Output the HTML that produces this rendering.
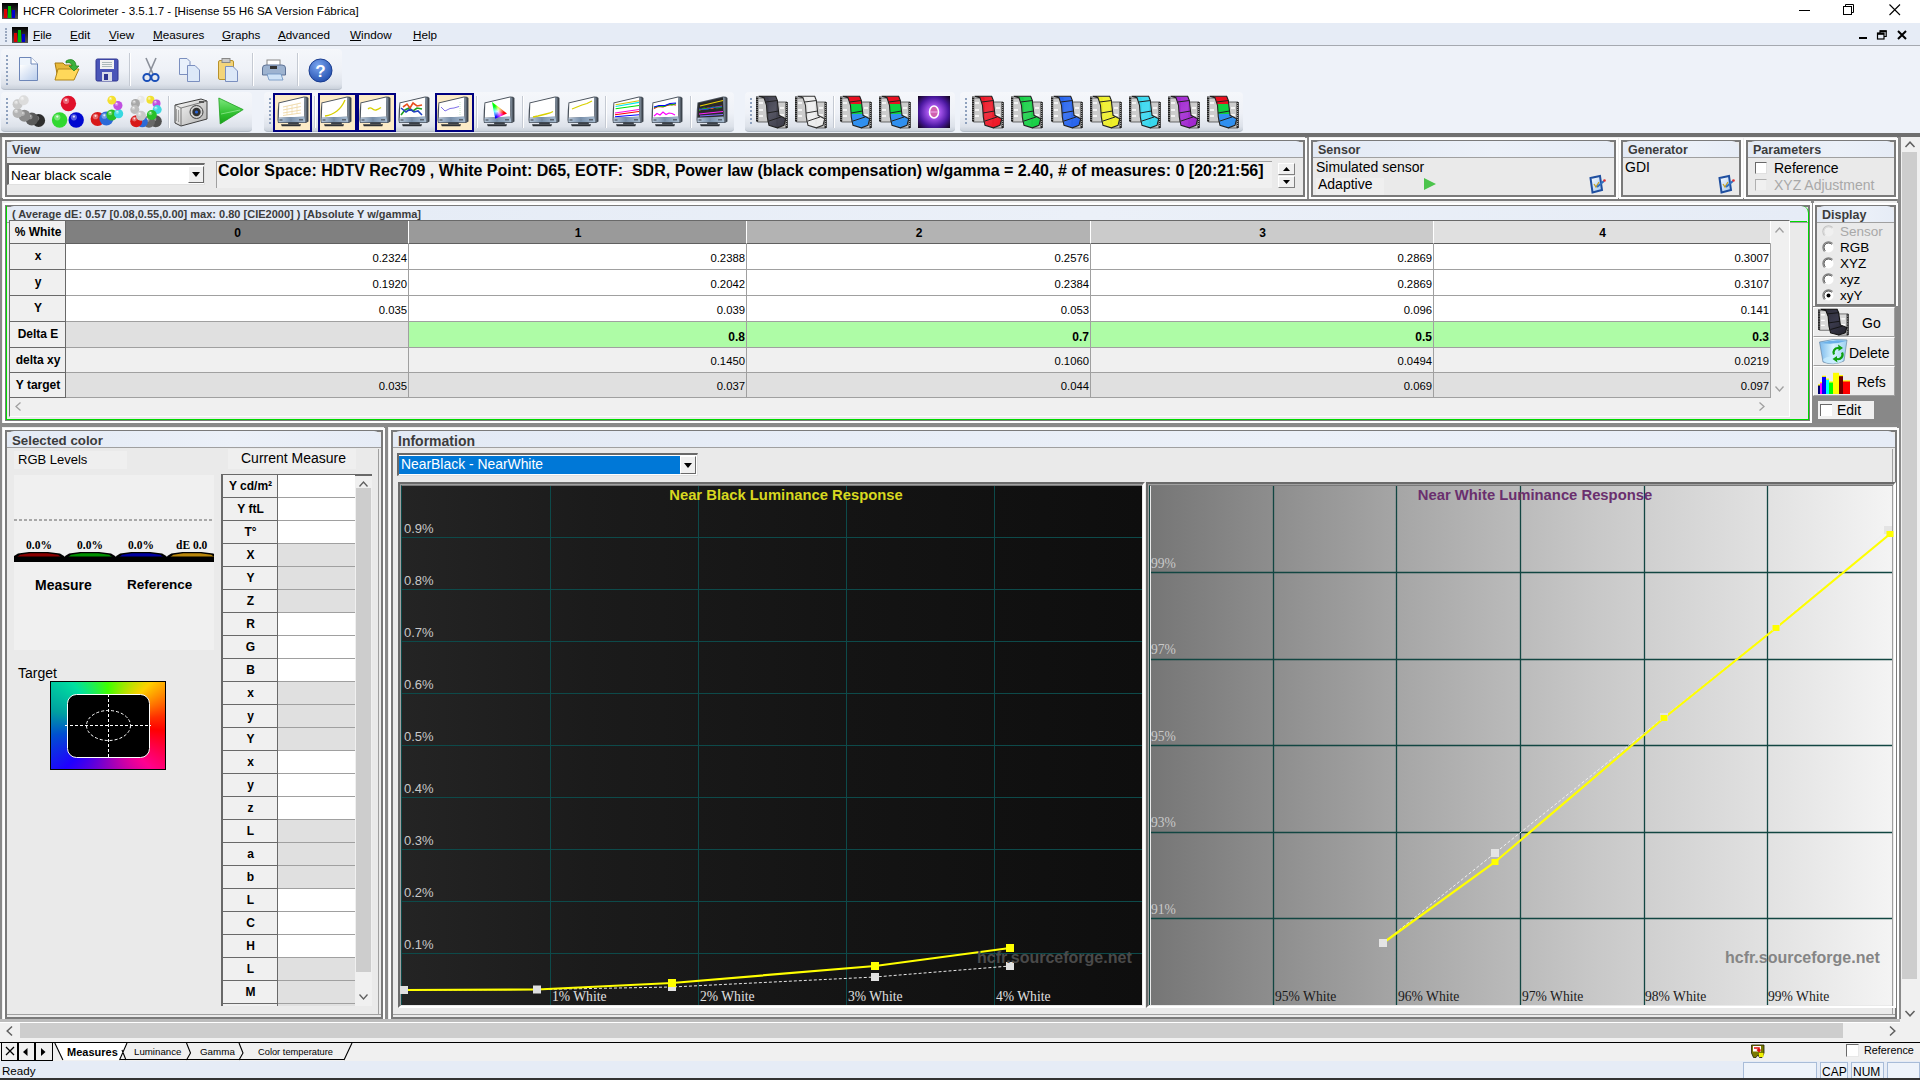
<!DOCTYPE html>
<html><head><meta charset="utf-8">
<style>
*{margin:0;padding:0;box-sizing:border-box}
html,body{width:1920px;height:1080px;overflow:hidden;background:#f0f0f0;font-family:"Liberation Sans",sans-serif;font-size:12px;color:#000;position:relative}
.a{position:absolute}
.t{position:absolute;white-space:nowrap;line-height:1}
.b{font-weight:bold}
svg{position:absolute;overflow:visible}
</style></head><body>

<div class="a" style="left:0px;top:0px;width:1920px;height:23px;background:#fff"></div>
<svg style="left:2px;top:3px" width="16" height="16" viewBox="0 0 16 16" ><defs><linearGradient id="ai" x1="0" y1="0" x2="0" y2="1"><stop offset="0" stop-color="#000"/><stop offset="1" stop-color="#555"/></linearGradient></defs>
<rect x="0" y="0" width="16" height="16" fill="url(#ai)"/>
<rect x="2" y="6" width="3" height="9" fill="#d00"/><rect x="6" y="3" width="3" height="12" fill="#0b0"/><rect x="10" y="7" width="3" height="8" fill="#00c"/></svg>
<div class="t" style="left:23px;top:5px;font-size:11.6px;color:#000">HCFR Colorimeter - 3.5.1.7 - [Hisense 55 H6 SA Version F&aacute;brica]</div>
<div class="a" style="left:1799px;top:10px;width:11px;height:1px;background:#000"></div>
<svg style="left:1843px;top:4px" width="12" height="12" viewBox="0 0 12 12" ><rect x="0.5" y="2.5" width="8" height="8" fill="none" stroke="#000"/><path d="M2.5 2.5 V0.5 H10.5 V8.5 H8.5" fill="none" stroke="#000"/></svg>
<svg style="left:1889px;top:4px" width="12" height="12" viewBox="0 0 12 12" ><path d="M0.5 0.5 L11 11 M11 0.5 L0.5 11" stroke="#000" stroke-width="1.1"/></svg>
<div class="a" style="left:0px;top:23px;width:1920px;height:22px;background:#e6ecf6"></div>
<div class="a" style="left:0px;top:45px;width:1920px;height:1px;background:#a5a9b0"></div>
<div class="a" style="left:0px;top:46px;width:1920px;height:87px;background:#eef2f9"></div>
<div class="a" style="left:0px;top:133px;width:1920px;height:4px;background:#6f6f6f"></div>
<div class="a" style="left:5px;top:28px;width:2px;height:2px;background:#9aa8bf"></div>
<div class="a" style="left:5px;top:31px;width:2px;height:2px;background:#9aa8bf"></div>
<div class="a" style="left:5px;top:34px;width:2px;height:2px;background:#9aa8bf"></div>
<div class="a" style="left:5px;top:37px;width:2px;height:2px;background:#9aa8bf"></div>
<div class="a" style="left:5px;top:40px;width:2px;height:2px;background:#9aa8bf"></div>
<svg style="left:12px;top:27px" width="16" height="16" viewBox="0 0 16 16" ><defs><linearGradient id="ai" x1="0" y1="0" x2="0" y2="1"><stop offset="0" stop-color="#000"/><stop offset="1" stop-color="#555"/></linearGradient></defs>
<rect x="0" y="0" width="16" height="16" fill="url(#ai)"/>
<rect x="2" y="6" width="3" height="9" fill="#d00"/><rect x="6" y="3" width="3" height="12" fill="#0b0"/><rect x="10" y="7" width="3" height="8" fill="#00c"/></svg>
<div class="t" style="left:33px;top:29px;font-size:11.7px;color:#000"><u>F</u>ile</div>
<div class="t" style="left:70px;top:29px;font-size:11.7px;color:#000"><u>E</u>dit</div>
<div class="t" style="left:109px;top:29px;font-size:11.7px;color:#000"><u>V</u>iew</div>
<div class="t" style="left:153px;top:29px;font-size:11.7px;color:#000"><u>M</u>easures</div>
<div class="t" style="left:222px;top:29px;font-size:11.7px;color:#000"><u>G</u>raphs</div>
<div class="t" style="left:278px;top:29px;font-size:11.7px;color:#000"><u>A</u>dvanced</div>
<div class="t" style="left:350px;top:29px;font-size:11.7px;color:#000"><u>W</u>indow</div>
<div class="t" style="left:413px;top:29px;font-size:11.7px;color:#000"><u>H</u>elp</div>
<div class="a" style="left:1859px;top:37px;width:8px;height:2px;background:#000"></div>
<svg style="left:1877px;top:30px" width="10" height="10" viewBox="0 0 10 10" ><rect x="0.5" y="3" width="6.5" height="6" fill="none" stroke="#000" stroke-width="1.2"/><rect x="0.5" y="3" width="6.5" height="1.8" fill="#000"/><path d="M3 3 V0.8 H9.2 V6.5 H7" fill="none" stroke="#000" stroke-width="1.2"/><rect x="3" y="0.5" width="6.5" height="1.6" fill="#000"/></svg>
<svg style="left:1897px;top:30px" width="10" height="10" viewBox="0 0 10 10" ><path d="M1 1 L9 9 M9 1 L1 9" stroke="#000" stroke-width="2"/></svg>
<div class="a" style="left:1px;top:49px;width:341px;height:41px;border-radius:4px;background:linear-gradient(#f5f7fb 0%,#eef1f7 55%,#dde2ea 88%,#c9d0da 100%);border-bottom:1px solid #b4bcc8"></div>
<div class="a" style="left:6px;top:55px;width:2px;height:2px;background:#8fa1bd"></div>
<div class="a" style="left:6px;top:59px;width:2px;height:2px;background:#8fa1bd"></div>
<div class="a" style="left:6px;top:63px;width:2px;height:2px;background:#8fa1bd"></div>
<div class="a" style="left:6px;top:67px;width:2px;height:2px;background:#8fa1bd"></div>
<div class="a" style="left:6px;top:71px;width:2px;height:2px;background:#8fa1bd"></div>
<div class="a" style="left:6px;top:75px;width:2px;height:2px;background:#8fa1bd"></div>
<div class="a" style="left:6px;top:79px;width:2px;height:2px;background:#8fa1bd"></div>
<div class="a" style="left:6px;top:83px;width:2px;height:2px;background:#8fa1bd"></div>
<div class="a" style="left:129px;top:53px;width:1px;height:33px;background:#c5cad3"></div>
<div class="a" style="left:130px;top:53px;width:1px;height:33px;background:#fff"></div>
<div class="a" style="left:252px;top:53px;width:1px;height:33px;background:#c5cad3"></div>
<div class="a" style="left:253px;top:53px;width:1px;height:33px;background:#fff"></div>
<div class="a" style="left:297px;top:53px;width:1px;height:33px;background:#c5cad3"></div>
<div class="a" style="left:298px;top:53px;width:1px;height:33px;background:#fff"></div>
<svg style="left:18px;top:56px" width="22" height="26" viewBox="0 0 22 26" ><path d="M1.5 1.5 H13 L19.5 8 V24.5 H1.5 Z" fill="#eef4fc" stroke="#6d86b8"/><path d="M13 1.5 V8 H19.5" fill="#fff" stroke="#6d86b8"/><defs><linearGradient id="ng" x1="0" y1="0" x2="1" y2="1"><stop offset="0" stop-color="#fff"/><stop offset="1" stop-color="#b9cdec"/></linearGradient></defs><rect x="2" y="9" width="17" height="15" fill="url(#ng)"/></svg>
<svg style="left:54px;top:57px" width="27" height="25" viewBox="0 0 27 25" ><path d="M1 6 H9 L11 8 H20 V22 H4 Z" fill="#e8b93a" stroke="#a77a12"/><path d="M4 12 H25 L20 23 H1 Z" fill="#ffd85a" stroke="#b08418"/><path d="M12 4 C17 1 22 3 22 9 L25 9 L20 14 L15 9 L18 9 C18 6 15 5 12 6Z" fill="#3cb23c" stroke="#1c7a1c" stroke-width="0.7"/></svg>
<svg style="left:95px;top:58px" width="24" height="24" viewBox="0 0 24 24" ><rect x="1" y="1" width="22" height="22" rx="1.5" fill="#4a55b8" stroke="#2e3590"/><rect x="5" y="2" width="14" height="9" fill="#f2f2f2"/><path d="M7 4.5 H17 M7 6.5 H17 M7 8.5 H17" stroke="#9aa" stroke-width="0.8"/><rect x="7" y="14" width="10" height="9" fill="#d8dbe8"/><rect x="9" y="16" width="4" height="6" fill="#2e3590"/></svg>
<svg style="left:141px;top:57px" width="20" height="26" viewBox="0 0 20 26" ><path d="M5 1 L12 17 M15 1 L8 17" stroke="#8a8f99" stroke-width="1.6"/><circle cx="6" cy="20.5" r="3.6" fill="none" stroke="#1a4fb8" stroke-width="2"/><circle cx="14" cy="20.5" r="3.6" fill="none" stroke="#1a4fb8" stroke-width="2"/></svg>
<svg style="left:178px;top:57px" width="24" height="26" viewBox="0 0 24 26" ><path d="M1.5 1.5 H9 L12 4.5 V17.5 H1.5Z" fill="#e8f0fb" stroke="#7b8fbf"/><path d="M9.5 8.5 H17 L21.5 13 V24.5 H9.5Z" fill="#dce8f8" stroke="#7b8fbf"/></svg>
<svg style="left:217px;top:57px" width="24" height="26" viewBox="0 0 24 26" ><rect x="1.5" y="3.5" width="15" height="19" rx="1.5" fill="#f3d479" stroke="#b8912a"/><rect x="5" y="1.5" width="8" height="4" fill="#c8c8c8" stroke="#888"/><path d="M8.5 9.5 H16 L20.5 14 V24.5 H8.5Z" fill="#dce8f8" stroke="#7b8fbf"/></svg>
<svg style="left:261px;top:58px" width="26" height="24" viewBox="0 0 26 24" ><rect x="6" y="2" width="13" height="8" fill="#fff" stroke="#888"/><path d="M1.5 10 Q1.5 7 5 7 H21 Q24.5 7 24.5 10 V17 H1.5Z" fill="#9db3d0" stroke="#5e7396"/><rect x="9" y="8" width="7" height="3" fill="#333"/><path d="M6 16 L20 16 L22 22 L8 22Z" fill="#cfe3f7" stroke="#6a8fbf" stroke-width="0.8"/></svg>
<svg style="left:308px;top:58px" width="26" height="26" viewBox="0 0 26 26" ><defs><radialGradient id="hg" cx="0.4" cy="0.3" r="0.8"><stop offset="0" stop-color="#7aa6f0"/><stop offset="1" stop-color="#1a46a8"/></radialGradient></defs><circle cx="12.5" cy="12.5" r="11.5" fill="url(#hg)" stroke="#1b3d8f"/><text x="12.5" y="19" text-anchor="middle" font-family="Liberation Sans" font-weight="bold" font-size="17" fill="#fff">?</text></svg>
<div class="a" style="left:1px;top:92px;width:251px;height:40px;border-radius:4px;background:linear-gradient(#f5f7fb 0%,#eef1f7 55%,#dde2ea 88%,#c9d0da 100%);border-bottom:1px solid #b4bcc8"></div>
<div class="a" style="left:6px;top:98px;width:2px;height:2px;background:#8fa1bd"></div>
<div class="a" style="left:6px;top:102px;width:2px;height:2px;background:#8fa1bd"></div>
<div class="a" style="left:6px;top:106px;width:2px;height:2px;background:#8fa1bd"></div>
<div class="a" style="left:6px;top:110px;width:2px;height:2px;background:#8fa1bd"></div>
<div class="a" style="left:6px;top:114px;width:2px;height:2px;background:#8fa1bd"></div>
<div class="a" style="left:6px;top:118px;width:2px;height:2px;background:#8fa1bd"></div>
<div class="a" style="left:6px;top:122px;width:2px;height:2px;background:#8fa1bd"></div>
<div class="a" style="left:168px;top:96px;width:1px;height:32px;background:#c5cad3"></div>
<div class="a" style="left:169px;top:96px;width:1px;height:32px;background:#fff"></div>
<svg style="left:0px;top:0px" width="260" height="136"><circle cx="38.6" cy="120.5" r="6.5" fill="#2e2e2e"/><circle cx="36.65" cy="118.225" r="2.6" fill="#fff" opacity="0.35"/><circle cx="36.65" cy="117.575" r="0.975" fill="#fff" opacity="0.8"/><circle cx="31.8" cy="119" r="6.5" fill="#5a5a5a"/><circle cx="29.85" cy="116.725" r="2.6" fill="#fff" opacity="0.35"/><circle cx="29.85" cy="116.075" r="0.975" fill="#fff" opacity="0.8"/><circle cx="24.4" cy="115.7" r="6" fill="#8a8a8a"/><circle cx="22.599999999999998" cy="113.60000000000001" r="2.4000000000000004" fill="#fff" opacity="0.35"/><circle cx="22.599999999999998" cy="113.0" r="0.8999999999999999" fill="#fff" opacity="0.8"/><circle cx="17.6" cy="113" r="5" fill="#b4b4b4"/><circle cx="16.1" cy="111.25" r="2.0" fill="#fff" opacity="0.35"/><circle cx="16.1" cy="110.75" r="0.75" fill="#fff" opacity="0.8"/><circle cx="17.6" cy="104.2" r="5" fill="#c8c8c8"/><circle cx="16.1" cy="102.45" r="2.0" fill="#fff" opacity="0.35"/><circle cx="16.1" cy="101.95" r="0.75" fill="#fff" opacity="0.8"/><circle cx="23.7" cy="100.2" r="5" fill="#dcdcdc"/><circle cx="22.2" cy="98.45" r="2.0" fill="#fff" opacity="0.35"/><circle cx="22.2" cy="97.95" r="0.75" fill="#fff" opacity="0.8"/><circle cx="68.4" cy="103.5" r="7.7" fill="#e0102a"/><circle cx="66.09" cy="100.805" r="3.08" fill="#fff" opacity="0.35"/><circle cx="66.09" cy="100.035" r="1.155" fill="#fff" opacity="0.8"/><circle cx="59.6" cy="120" r="7.7" fill="#30d830"/><circle cx="57.29" cy="117.305" r="3.08" fill="#fff" opacity="0.35"/><circle cx="57.29" cy="116.535" r="1.155" fill="#fff" opacity="0.8"/><circle cx="76.2" cy="120" r="7.7" fill="#0008d0"/><circle cx="73.89" cy="117.305" r="3.08" fill="#fff" opacity="0.35"/><circle cx="73.89" cy="116.535" r="1.155" fill="#fff" opacity="0.8"/><circle cx="97.6" cy="119" r="7" fill="#d81818"/><circle cx="95.5" cy="116.55" r="2.8000000000000003" fill="#fff" opacity="0.35"/><circle cx="95.5" cy="115.85" r="1.05" fill="#fff" opacity="0.8"/><circle cx="106.4" cy="118.5" r="7" fill="#2c6ad8"/><circle cx="104.30000000000001" cy="116.05" r="2.8000000000000003" fill="#fff" opacity="0.35"/><circle cx="104.30000000000001" cy="115.35" r="1.05" fill="#fff" opacity="0.8"/><circle cx="111.8" cy="115" r="5.5" fill="#28c028"/><circle cx="110.14999999999999" cy="113.075" r="2.2" fill="#fff" opacity="0.35"/><circle cx="110.14999999999999" cy="112.525" r="0.825" fill="#fff" opacity="0.8"/><circle cx="118.6" cy="113.7" r="4.6" fill="#38d8e0"/><circle cx="117.22" cy="112.09" r="1.8399999999999999" fill="#fff" opacity="0.35"/><circle cx="117.22" cy="111.63000000000001" r="0.69" fill="#fff" opacity="0.8"/><circle cx="117.9" cy="105.6" r="4.6" fill="#c050e0"/><circle cx="116.52000000000001" cy="103.99" r="1.8399999999999999" fill="#fff" opacity="0.35"/><circle cx="116.52000000000001" cy="103.53" r="0.69" fill="#fff" opacity="0.8"/><circle cx="111.8" cy="100.2" r="4.4" fill="#f4e030"/><circle cx="110.48" cy="98.66" r="1.7600000000000002" fill="#fff" opacity="0.35"/><circle cx="110.48" cy="98.22" r="0.66" fill="#fff" opacity="0.8"/><circle cx="141" cy="99.5" r="3.7" fill="#e8e8e8"/><circle cx="139.89" cy="98.205" r="1.4800000000000002" fill="#fff" opacity="0.35"/><circle cx="139.89" cy="97.835" r="0.555" fill="#fff" opacity="0.8"/><circle cx="150.4" cy="99.8" r="4" fill="#f0e030"/><circle cx="149.20000000000002" cy="98.39999999999999" r="1.6" fill="#fff" opacity="0.35"/><circle cx="149.20000000000002" cy="98.0" r="0.6" fill="#fff" opacity="0.8"/><circle cx="156.5" cy="103.5" r="4" fill="#c050e0"/><circle cx="155.3" cy="102.1" r="1.6" fill="#fff" opacity="0.35"/><circle cx="155.3" cy="101.7" r="0.6" fill="#fff" opacity="0.8"/><circle cx="157.2" cy="109.6" r="4.5" fill="#40d8e0"/><circle cx="155.85" cy="108.02499999999999" r="1.8" fill="#fff" opacity="0.35"/><circle cx="155.85" cy="107.57499999999999" r="0.6749999999999999" fill="#fff" opacity="0.8"/><circle cx="135.5" cy="103.5" r="4.5" fill="#a8a8a8"/><circle cx="134.15" cy="101.925" r="1.8" fill="#fff" opacity="0.35"/><circle cx="134.15" cy="101.475" r="0.6749999999999999" fill="#fff" opacity="0.8"/><circle cx="134.8" cy="109.6" r="4.5" fill="#bdbdbd"/><circle cx="133.45000000000002" cy="108.02499999999999" r="1.8" fill="#fff" opacity="0.35"/><circle cx="133.45000000000002" cy="107.57499999999999" r="0.6749999999999999" fill="#fff" opacity="0.8"/><circle cx="155.8" cy="121.2" r="6" fill="#505050"/><circle cx="154.0" cy="119.10000000000001" r="2.4000000000000004" fill="#fff" opacity="0.35"/><circle cx="154.0" cy="118.5" r="0.8999999999999999" fill="#fff" opacity="0.8"/><circle cx="149" cy="121.8" r="6" fill="#686868"/><circle cx="147.2" cy="119.7" r="2.4000000000000004" fill="#fff" opacity="0.35"/><circle cx="147.2" cy="119.1" r="0.8999999999999999" fill="#fff" opacity="0.8"/><circle cx="142.3" cy="121.8" r="5.5" fill="#2c6ad8"/><circle cx="140.65" cy="119.875" r="2.2" fill="#fff" opacity="0.35"/><circle cx="140.65" cy="119.325" r="0.825" fill="#fff" opacity="0.8"/><circle cx="136.2" cy="121.2" r="6" fill="#d81818"/><circle cx="134.39999999999998" cy="119.10000000000001" r="2.4000000000000004" fill="#fff" opacity="0.35"/><circle cx="134.39999999999998" cy="118.5" r="0.8999999999999999" fill="#fff" opacity="0.8"/><circle cx="141" cy="115.7" r="5" fill="#c8c8c8"/><circle cx="139.5" cy="113.95" r="2.0" fill="#fff" opacity="0.35"/><circle cx="139.5" cy="113.45" r="0.75" fill="#fff" opacity="0.8"/><circle cx="151.8" cy="115" r="5" fill="#28c028"/><circle cx="150.3" cy="113.25" r="2.0" fill="#fff" opacity="0.35"/><circle cx="150.3" cy="112.75" r="0.75" fill="#fff" opacity="0.8"/></svg>
<svg style="left:174px;top:97px" width="34" height="30" viewBox="0 0 34 30" ><defs><linearGradient id="cm" x1="0" y1="0" x2="1" y2="1"><stop offset="0" stop-color="#fafafa"/><stop offset="1" stop-color="#b0b0b0"/></linearGradient></defs><path d="M1 8 L27 2 L33 4 L33 22 L7 29 L1 26Z" fill="url(#cm)" stroke="#404040" stroke-width="1"/><path d="M1 8 L7 11 L33 4 M7 11 V29" fill="none" stroke="#606060" stroke-width="0.8"/><path d="M2.5 12 V24 M4.5 13 V25" stroke="#909090" stroke-width="0.8"/><circle cx="22.5" cy="15" r="6.5" fill="#d0d0d0" stroke="#404040"/><circle cx="22.5" cy="15" r="4.2" fill="#303030"/><circle cx="22.5" cy="15" r="1.6" fill="#2a64d8"/><rect x="25" y="4" width="5" height="2" fill="#555"/></svg>
<svg style="left:218px;top:97px" width="27" height="28" viewBox="0 0 27 28" ><defs><linearGradient id="pl" x1="0" y1="0" x2="0" y2="1"><stop offset="0" stop-color="#7ee87e"/><stop offset="0.6" stop-color="#30c030"/><stop offset="1" stop-color="#18a018"/></linearGradient></defs><path d="M0.8 1 L25.2 12.6 L2.2 26.9Z" fill="url(#pl)" stroke="#20a020" stroke-width="0.8"/><path d="M3 17 L22 13" stroke="#b8f8b8" stroke-width="0.8" opacity="0.7"/></svg>
<div class="a" style="left:264px;top:92px;width:470px;height:40px;border-radius:4px;background:linear-gradient(#f5f7fb 0%,#eef1f7 55%,#dde2ea 88%,#c9d0da 100%);border-bottom:1px solid #b4bcc8"></div>
<div class="a" style="left:269px;top:98px;width:2px;height:2px;background:#8fa1bd"></div>
<div class="a" style="left:269px;top:102px;width:2px;height:2px;background:#8fa1bd"></div>
<div class="a" style="left:269px;top:106px;width:2px;height:2px;background:#8fa1bd"></div>
<div class="a" style="left:269px;top:110px;width:2px;height:2px;background:#8fa1bd"></div>
<div class="a" style="left:269px;top:114px;width:2px;height:2px;background:#8fa1bd"></div>
<div class="a" style="left:269px;top:118px;width:2px;height:2px;background:#8fa1bd"></div>
<div class="a" style="left:269px;top:122px;width:2px;height:2px;background:#8fa1bd"></div>
<div class="a" style="left:273px;top:93px;width:39px;height:39px;background:#fcebc6;border:2px solid #000080"></div>
<div class="a" style="left:318px;top:93px;width:39px;height:39px;background:#fcebc6;border:2px solid #000080"></div>
<div class="a" style="left:357px;top:93px;width:39px;height:39px;background:#fcebc6;border:2px solid #000080"></div>
<div class="a" style="left:435px;top:93px;width:39px;height:39px;background:#fcebc6;border:2px solid #000080"></div>
<div class="a" style="left:314px;top:96px;width:1px;height:32px;background:#c5cad3"></div>
<div class="a" style="left:315px;top:96px;width:1px;height:32px;background:#fff"></div>
<div class="a" style="left:476px;top:96px;width:1px;height:32px;background:#c5cad3"></div>
<div class="a" style="left:477px;top:96px;width:1px;height:32px;background:#fff"></div>
<div class="a" style="left:522px;top:96px;width:1px;height:32px;background:#c5cad3"></div>
<div class="a" style="left:523px;top:96px;width:1px;height:32px;background:#fff"></div>
<div class="a" style="left:605px;top:96px;width:1px;height:32px;background:#c5cad3"></div>
<div class="a" style="left:606px;top:96px;width:1px;height:32px;background:#fff"></div>
<div class="a" style="left:690px;top:96px;width:1px;height:32px;background:#c5cad3"></div>
<div class="a" style="left:691px;top:96px;width:1px;height:32px;background:#fff"></div>
<svg style="left:277px;top:96px" width="32" height="32" viewBox="0 0 32 32" ><defs><linearGradient id="mb0" x1="0" y1="0" x2="1" y2="0"><stop offset="0" stop-color="#b8c8da"/><stop offset="0.45" stop-color="#7890ac"/><stop offset="1" stop-color="#a8bcd0"/></linearGradient>
<linearGradient id="mr0" x1="0" y1="0" x2="1" y2="0"><stop offset="0" stop-color="#9aaabb"/><stop offset="1" stop-color="#30363e"/></linearGradient></defs>
<path d="M1.5 6.5 L27 0.5 L30 0.8 L31.5 2 V25.5 L29 27 H1 L0.5 24 L0.8 14 Z" fill="#4a525c"/>
<path d="M2.3 7.3 L27 1.5 L27.3 20.8 L1.8 21.8 Z" fill="#fff"/>
<path d="M1.5 21.8 L27.5 20.6 L28.3 26.2 H1.5Z" fill="url(#mb0)"/>
<path d="M27.2 1.3 L30.8 2.2 V25.3 L28.3 26.2Z" fill="url(#mr0)"/>
<rect x="2.5" y="23.3" width="3" height="1.4" fill="#5a6470"/><rect x="22" y="23" width="4" height="1.5" fill="#5a6470"/><rect x="13.5" y="23.4" width="1.3" height="1.2" fill="#7a8898"/>
<path d="M11.3 26.2 H21.5 L22 28.3 H11 Z" fill="#3a4048"/>
<path d="M4 28.3 H24 L23.3 30.2 H4.8Z" fill="#2c3036"/>
<path d="M6 11 L24 7 M6 14 L24 10.5 M6 17 L24 14 M6 19.5 L24 17" stroke="#f0dcb0" stroke-width="1.2"/><path d="M10 10 V19 M15 9 V18.5 M20 8 V18" stroke="#f0dcb0" stroke-width="0.8"/></svg>
<svg style="left:320px;top:96px" width="32" height="32" viewBox="0 0 32 32" ><defs><linearGradient id="mb1" x1="0" y1="0" x2="1" y2="0"><stop offset="0" stop-color="#b8c8da"/><stop offset="0.45" stop-color="#7890ac"/><stop offset="1" stop-color="#a8bcd0"/></linearGradient>
<linearGradient id="mr1" x1="0" y1="0" x2="1" y2="0"><stop offset="0" stop-color="#9aaabb"/><stop offset="1" stop-color="#30363e"/></linearGradient></defs>
<path d="M1.5 6.5 L27 0.5 L30 0.8 L31.5 2 V25.5 L29 27 H1 L0.5 24 L0.8 14 Z" fill="#4a525c"/>
<path d="M2.3 7.3 L27 1.5 L27.3 20.8 L1.8 21.8 Z" fill="#fff"/>
<path d="M1.5 21.8 L27.5 20.6 L28.3 26.2 H1.5Z" fill="url(#mb1)"/>
<path d="M27.2 1.3 L30.8 2.2 V25.3 L28.3 26.2Z" fill="url(#mr1)"/>
<rect x="2.5" y="23.3" width="3" height="1.4" fill="#5a6470"/><rect x="22" y="23" width="4" height="1.5" fill="#5a6470"/><rect x="13.5" y="23.4" width="1.3" height="1.2" fill="#7a8898"/>
<path d="M11.3 26.2 H21.5 L22 28.3 H11 Z" fill="#3a4048"/>
<path d="M4 28.3 H24 L23.3 30.2 H4.8Z" fill="#2c3036"/>
<path d="M5 20 Q12 19 17 15 Q22 11 25 4" fill="none" stroke="#d8d000" stroke-width="1.3"/></svg>
<svg style="left:359px;top:96px" width="32" height="32" viewBox="0 0 32 32" ><defs><linearGradient id="mb2" x1="0" y1="0" x2="1" y2="0"><stop offset="0" stop-color="#b8c8da"/><stop offset="0.45" stop-color="#7890ac"/><stop offset="1" stop-color="#a8bcd0"/></linearGradient>
<linearGradient id="mr2" x1="0" y1="0" x2="1" y2="0"><stop offset="0" stop-color="#9aaabb"/><stop offset="1" stop-color="#30363e"/></linearGradient></defs>
<path d="M1.5 6.5 L27 0.5 L30 0.8 L31.5 2 V25.5 L29 27 H1 L0.5 24 L0.8 14 Z" fill="#4a525c"/>
<path d="M2.3 7.3 L27 1.5 L27.3 20.8 L1.8 21.8 Z" fill="#fff"/>
<path d="M1.5 21.8 L27.5 20.6 L28.3 26.2 H1.5Z" fill="url(#mb2)"/>
<path d="M27.2 1.3 L30.8 2.2 V25.3 L28.3 26.2Z" fill="url(#mr2)"/>
<rect x="2.5" y="23.3" width="3" height="1.4" fill="#5a6470"/><rect x="22" y="23" width="4" height="1.5" fill="#5a6470"/><rect x="13.5" y="23.4" width="1.3" height="1.2" fill="#7a8898"/>
<path d="M11.3 26.2 H21.5 L22 28.3 H11 Z" fill="#3a4048"/>
<path d="M4 28.3 H24 L23.3 30.2 H4.8Z" fill="#2c3036"/>
<path d="M9 13 Q11 11 13 12.5 Q15 14.5 17 14 Q19 13.5 22 11.5" fill="none" stroke="#d8d000" stroke-width="1.3"/></svg>
<svg style="left:398px;top:96px" width="32" height="32" viewBox="0 0 32 32" ><defs><linearGradient id="mb3" x1="0" y1="0" x2="1" y2="0"><stop offset="0" stop-color="#b8c8da"/><stop offset="0.45" stop-color="#7890ac"/><stop offset="1" stop-color="#a8bcd0"/></linearGradient>
<linearGradient id="mr3" x1="0" y1="0" x2="1" y2="0"><stop offset="0" stop-color="#9aaabb"/><stop offset="1" stop-color="#30363e"/></linearGradient></defs>
<path d="M1.5 6.5 L27 0.5 L30 0.8 L31.5 2 V25.5 L29 27 H1 L0.5 24 L0.8 14 Z" fill="#4a525c"/>
<path d="M2.3 7.3 L27 1.5 L27.3 20.8 L1.8 21.8 Z" fill="#fff"/>
<path d="M1.5 21.8 L27.5 20.6 L28.3 26.2 H1.5Z" fill="url(#mb3)"/>
<path d="M27.2 1.3 L30.8 2.2 V25.3 L28.3 26.2Z" fill="url(#mr3)"/>
<rect x="2.5" y="23.3" width="3" height="1.4" fill="#5a6470"/><rect x="22" y="23" width="4" height="1.5" fill="#5a6470"/><rect x="13.5" y="23.4" width="1.3" height="1.2" fill="#7a8898"/>
<path d="M11.3 26.2 H21.5 L22 28.3 H11 Z" fill="#3a4048"/>
<path d="M4 28.3 H24 L23.3 30.2 H4.8Z" fill="#2c3036"/>
<path d="M3 19 L7 14 L11 12 L15 15 L19 12 L24 13" fill="none" stroke="#20a020" stroke-width="1.6"/><path d="M3 12 L8 16 L12 13 L16 16 L20 15 L24 19" fill="none" stroke="#2040c0" stroke-width="1.6"/><path d="M5 11 L9 8 L12 12 L15 7 L19 10 L24 9" fill="none" stroke="#e85020" stroke-width="1.6"/></svg>
<svg style="left:437px;top:96px" width="32" height="32" viewBox="0 0 32 32" ><defs><linearGradient id="mb4" x1="0" y1="0" x2="1" y2="0"><stop offset="0" stop-color="#b8c8da"/><stop offset="0.45" stop-color="#7890ac"/><stop offset="1" stop-color="#a8bcd0"/></linearGradient>
<linearGradient id="mr4" x1="0" y1="0" x2="1" y2="0"><stop offset="0" stop-color="#9aaabb"/><stop offset="1" stop-color="#30363e"/></linearGradient></defs>
<path d="M1.5 6.5 L27 0.5 L30 0.8 L31.5 2 V25.5 L29 27 H1 L0.5 24 L0.8 14 Z" fill="#4a525c"/>
<path d="M2.3 7.3 L27 1.5 L27.3 20.8 L1.8 21.8 Z" fill="#fff"/>
<path d="M1.5 21.8 L27.5 20.6 L28.3 26.2 H1.5Z" fill="url(#mb4)"/>
<path d="M27.2 1.3 L30.8 2.2 V25.3 L28.3 26.2Z" fill="url(#mr4)"/>
<rect x="2.5" y="23.3" width="3" height="1.4" fill="#5a6470"/><rect x="22" y="23" width="4" height="1.5" fill="#5a6470"/><rect x="13.5" y="23.4" width="1.3" height="1.2" fill="#7a8898"/>
<path d="M11.3 26.2 H21.5 L22 28.3 H11 Z" fill="#3a4048"/>
<path d="M4 28.3 H24 L23.3 30.2 H4.8Z" fill="#2c3036"/>
<path d="M4 11 L8 15 L13 12.5 L17 12 L22 10.5" fill="none" stroke="#8070e8" stroke-width="1"/><path d="M23 6 V20" stroke="#b8e0b8" stroke-width="0.8" stroke-dasharray="1 1"/></svg>
<svg style="left:483px;top:96px" width="32" height="32" viewBox="0 0 32 32" ><defs><linearGradient id="mb5" x1="0" y1="0" x2="1" y2="0"><stop offset="0" stop-color="#b8c8da"/><stop offset="0.45" stop-color="#7890ac"/><stop offset="1" stop-color="#a8bcd0"/></linearGradient>
<linearGradient id="mr5" x1="0" y1="0" x2="1" y2="0"><stop offset="0" stop-color="#9aaabb"/><stop offset="1" stop-color="#30363e"/></linearGradient></defs>
<path d="M1.5 6.5 L27 0.5 L30 0.8 L31.5 2 V25.5 L29 27 H1 L0.5 24 L0.8 14 Z" fill="#4a525c"/>
<path d="M2.3 7.3 L27 1.5 L27.3 20.8 L1.8 21.8 Z" fill="#fff"/>
<path d="M1.5 21.8 L27.5 20.6 L28.3 26.2 H1.5Z" fill="url(#mb5)"/>
<path d="M27.2 1.3 L30.8 2.2 V25.3 L28.3 26.2Z" fill="url(#mr5)"/>
<rect x="2.5" y="23.3" width="3" height="1.4" fill="#5a6470"/><rect x="22" y="23" width="4" height="1.5" fill="#5a6470"/><rect x="13.5" y="23.4" width="1.3" height="1.2" fill="#7a8898"/>
<path d="M11.3 26.2 H21.5 L22 28.3 H11 Z" fill="#3a4048"/>
<path d="M4 28.3 H24 L23.3 30.2 H4.8Z" fill="#2c3036"/>
</svg>
<svg style="left:528px;top:96px" width="32" height="32" viewBox="0 0 32 32" ><defs><linearGradient id="mb6" x1="0" y1="0" x2="1" y2="0"><stop offset="0" stop-color="#b8c8da"/><stop offset="0.45" stop-color="#7890ac"/><stop offset="1" stop-color="#a8bcd0"/></linearGradient>
<linearGradient id="mr6" x1="0" y1="0" x2="1" y2="0"><stop offset="0" stop-color="#9aaabb"/><stop offset="1" stop-color="#30363e"/></linearGradient></defs>
<path d="M1.5 6.5 L27 0.5 L30 0.8 L31.5 2 V25.5 L29 27 H1 L0.5 24 L0.8 14 Z" fill="#4a525c"/>
<path d="M2.3 7.3 L27 1.5 L27.3 20.8 L1.8 21.8 Z" fill="#fff"/>
<path d="M1.5 21.8 L27.5 20.6 L28.3 26.2 H1.5Z" fill="url(#mb6)"/>
<path d="M27.2 1.3 L30.8 2.2 V25.3 L28.3 26.2Z" fill="url(#mr6)"/>
<rect x="2.5" y="23.3" width="3" height="1.4" fill="#5a6470"/><rect x="22" y="23" width="4" height="1.5" fill="#5a6470"/><rect x="13.5" y="23.4" width="1.3" height="1.2" fill="#7a8898"/>
<path d="M11.3 26.2 H21.5 L22 28.3 H11 Z" fill="#3a4048"/>
<path d="M4 28.3 H24 L23.3 30.2 H4.8Z" fill="#2c3036"/>
<path d="M5 21 L10 20 L14 19 L18 18 L22 17 L25 15.5" fill="none" stroke="#d8d000" stroke-width="1.3"/></svg>
<svg style="left:567px;top:96px" width="32" height="32" viewBox="0 0 32 32" ><defs><linearGradient id="mb7" x1="0" y1="0" x2="1" y2="0"><stop offset="0" stop-color="#b8c8da"/><stop offset="0.45" stop-color="#7890ac"/><stop offset="1" stop-color="#a8bcd0"/></linearGradient>
<linearGradient id="mr7" x1="0" y1="0" x2="1" y2="0"><stop offset="0" stop-color="#9aaabb"/><stop offset="1" stop-color="#30363e"/></linearGradient></defs>
<path d="M1.5 6.5 L27 0.5 L30 0.8 L31.5 2 V25.5 L29 27 H1 L0.5 24 L0.8 14 Z" fill="#4a525c"/>
<path d="M2.3 7.3 L27 1.5 L27.3 20.8 L1.8 21.8 Z" fill="#fff"/>
<path d="M1.5 21.8 L27.5 20.6 L28.3 26.2 H1.5Z" fill="url(#mb7)"/>
<path d="M27.2 1.3 L30.8 2.2 V25.3 L28.3 26.2Z" fill="url(#mr7)"/>
<rect x="2.5" y="23.3" width="3" height="1.4" fill="#5a6470"/><rect x="22" y="23" width="4" height="1.5" fill="#5a6470"/><rect x="13.5" y="23.4" width="1.3" height="1.2" fill="#7a8898"/>
<path d="M11.3 26.2 H21.5 L22 28.3 H11 Z" fill="#3a4048"/>
<path d="M4 28.3 H24 L23.3 30.2 H4.8Z" fill="#2c3036"/>
<path d="M5 13 L10 11 L15 9 L20 7.5 L25 5" fill="none" stroke="#d8d000" stroke-width="1.3"/></svg>
<svg style="left:612px;top:96px" width="32" height="32" viewBox="0 0 32 32" ><defs><linearGradient id="mb8" x1="0" y1="0" x2="1" y2="0"><stop offset="0" stop-color="#b8c8da"/><stop offset="0.45" stop-color="#7890ac"/><stop offset="1" stop-color="#a8bcd0"/></linearGradient>
<linearGradient id="mr8" x1="0" y1="0" x2="1" y2="0"><stop offset="0" stop-color="#9aaabb"/><stop offset="1" stop-color="#30363e"/></linearGradient></defs>
<path d="M1.5 6.5 L27 0.5 L30 0.8 L31.5 2 V25.5 L29 27 H1 L0.5 24 L0.8 14 Z" fill="#4a525c"/>
<path d="M2.3 7.3 L27 1.5 L27.3 20.8 L1.8 21.8 Z" fill="#fff"/>
<path d="M1.5 21.8 L27.5 20.6 L28.3 26.2 H1.5Z" fill="url(#mb8)"/>
<path d="M27.2 1.3 L30.8 2.2 V25.3 L28.3 26.2Z" fill="url(#mr8)"/>
<rect x="2.5" y="23.3" width="3" height="1.4" fill="#5a6470"/><rect x="22" y="23" width="4" height="1.5" fill="#5a6470"/><rect x="13.5" y="23.4" width="1.3" height="1.2" fill="#7a8898"/>
<path d="M11.3 26.2 H21.5 L22 28.3 H11 Z" fill="#3a4048"/>
<path d="M4 28.3 H24 L23.3 30.2 H4.8Z" fill="#2c3036"/>
<path d="M3.6 8.8 L27 4.7" stroke="#d8c000" stroke-width="1.1"/><path d="M3.6 10.5 L27 6.4" stroke="#00e8f0" stroke-width="1.1"/><path d="M3.6 12.7 L27 9.5" stroke="#00e000" stroke-width="1.1"/><path d="M3 17 L27 13.5" stroke="#ff00e0" stroke-width="1.1"/><path d="M3 18.7 L27 15.5" stroke="#ff0000" stroke-width="1.1"/><path d="M3 20.8 L27 18.8" stroke="#0000ff" stroke-width="1.1"/></svg>
<svg style="left:651px;top:96px" width="32" height="32" viewBox="0 0 32 32" ><defs><linearGradient id="mb9" x1="0" y1="0" x2="1" y2="0"><stop offset="0" stop-color="#b8c8da"/><stop offset="0.45" stop-color="#7890ac"/><stop offset="1" stop-color="#a8bcd0"/></linearGradient>
<linearGradient id="mr9" x1="0" y1="0" x2="1" y2="0"><stop offset="0" stop-color="#9aaabb"/><stop offset="1" stop-color="#30363e"/></linearGradient></defs>
<path d="M1.5 6.5 L27 0.5 L30 0.8 L31.5 2 V25.5 L29 27 H1 L0.5 24 L0.8 14 Z" fill="#4a525c"/>
<path d="M2.3 7.3 L27 1.5 L27.3 20.8 L1.8 21.8 Z" fill="#fff"/>
<path d="M1.5 21.8 L27.5 20.6 L28.3 26.2 H1.5Z" fill="url(#mb9)"/>
<path d="M27.2 1.3 L30.8 2.2 V25.3 L28.3 26.2Z" fill="url(#mr9)"/>
<rect x="2.5" y="23.3" width="3" height="1.4" fill="#5a6470"/><rect x="22" y="23" width="4" height="1.5" fill="#5a6470"/><rect x="13.5" y="23.4" width="1.3" height="1.2" fill="#7a8898"/>
<path d="M11.3 26.2 H21.5 L22 28.3 H11 Z" fill="#3a4048"/>
<path d="M4 28.3 H24 L23.3 30.2 H4.8Z" fill="#2c3036"/>
<path d="M3 12.5 L7 10.5 L12 11 L16 9.5 L20 8.5 L25 9" fill="none" stroke="#ff0000" stroke-width="1.2"/><path d="M3 11.5 L8 10 L13 10.5 L17 8.5 L21 9 L25 7.5" fill="none" stroke="#00d000" stroke-width="1.1"/><path d="M3 11 L8 9.5 L14 9.5 L19 7.5 L25 7" fill="none" stroke="#0000ff" stroke-width="1.1"/><path d="M3 20 L6 17.5 L9 19 L12 16 L15 18.5 L18 17 L21 17.5 L24 19" fill="none" stroke="#ff00ff" stroke-width="1.2"/></svg>
<svg style="left:696px;top:96px" width="32" height="32" viewBox="0 0 32 32" ><defs><linearGradient id="mb10" x1="0" y1="0" x2="1" y2="0"><stop offset="0" stop-color="#b8c8da"/><stop offset="0.45" stop-color="#7890ac"/><stop offset="1" stop-color="#a8bcd0"/></linearGradient>
<linearGradient id="mr10" x1="0" y1="0" x2="1" y2="0"><stop offset="0" stop-color="#9aaabb"/><stop offset="1" stop-color="#30363e"/></linearGradient></defs>
<path d="M1.5 6.5 L27 0.5 L30 0.8 L31.5 2 V25.5 L29 27 H1 L0.5 24 L0.8 14 Z" fill="#4a525c"/>
<path d="M2.3 7.3 L27 1.5 L27.3 20.8 L1.8 21.8 Z" fill="#2a2a2a"/>
<path d="M1.5 21.8 L27.5 20.6 L28.3 26.2 H1.5Z" fill="url(#mb10)"/>
<path d="M27.2 1.3 L30.8 2.2 V25.3 L28.3 26.2Z" fill="url(#mr10)"/>
<rect x="2.5" y="23.3" width="3" height="1.4" fill="#5a6470"/><rect x="22" y="23" width="4" height="1.5" fill="#5a6470"/><rect x="13.5" y="23.4" width="1.3" height="1.2" fill="#7a8898"/>
<path d="M11.3 26.2 H21.5 L22 28.3 H11 Z" fill="#3a4048"/>
<path d="M4 28.3 H24 L23.3 30.2 H4.8Z" fill="#2c3036"/>
<path d="M4 10 L27 4.5" stroke="#e8d000" stroke-width="1.1"/><path d="M3 14 L8 13 L12 12 L16 12.5 L20 11 L26 10" fill="none" stroke="#ff6020" stroke-width="1"/><path d="M3 14.5 L8 12 L12 13 L17 11 L21 12 L26 11" fill="none" stroke="#10c010" stroke-width="1"/><path d="M3 13 L10 13.5 L16 11.5 L26 10.5" fill="none" stroke="#2040ff" stroke-width="0.9"/><path d="M3 18 L27 15.5" stroke="#ff20ff" stroke-width="1.1"/><path d="M4 20 L27 18.5" stroke="#8070ff" stroke-width="1"/></svg>
<div class="a" style="left:492px;top:102px;width:15px;height:17px;clip-path:polygon(0% 0%,100% 67.6%,21.3% 98.8%);background:radial-gradient(circle at 40% 55%,rgba(255,255,255,0.95) 0px,rgba(255,255,255,0) 6px),conic-gradient(from 0deg at 40% 55%,#c0ff00 0deg,#ff0000 104deg,#ff00ff 150deg,#0000ff 200deg,#00ffff 270deg,#00ff00 328deg,#c0ff00 360deg)"></div>
<div class="a" style="left:745px;top:92px;width:210px;height:40px;border-radius:4px;background:linear-gradient(#f5f7fb 0%,#eef1f7 55%,#dde2ea 88%,#c9d0da 100%);border-bottom:1px solid #b4bcc8"></div>
<div class="a" style="left:750px;top:98px;width:2px;height:2px;background:#8fa1bd"></div>
<div class="a" style="left:750px;top:102px;width:2px;height:2px;background:#8fa1bd"></div>
<div class="a" style="left:750px;top:106px;width:2px;height:2px;background:#8fa1bd"></div>
<div class="a" style="left:750px;top:110px;width:2px;height:2px;background:#8fa1bd"></div>
<div class="a" style="left:750px;top:114px;width:2px;height:2px;background:#8fa1bd"></div>
<div class="a" style="left:750px;top:118px;width:2px;height:2px;background:#8fa1bd"></div>
<div class="a" style="left:750px;top:122px;width:2px;height:2px;background:#8fa1bd"></div>
<div class="a" style="left:833px;top:96px;width:1px;height:32px;background:#c5cad3"></div>
<div class="a" style="left:834px;top:96px;width:1px;height:32px;background:#fff"></div>
<svg style="left:756px;top:96px" width="34" height="34" viewBox="0 0 34 34" ><defs><linearGradient id="fg0" x1="0" y1="0" x2="1" y2="1"><stop offset="0" stop-color="#3a3a48"/><stop offset="0.5" stop-color="#3a3a48" stop-opacity="0.85"/><stop offset="1" stop-color="#3a3a48"/></linearGradient></defs>
<path d="M1.5 2 H12 V26 H1.5Z" fill="#cdcdcd" stroke="#333" stroke-width="0.7"/>
<path d="M3 7 H7 M3 14 H7 M3 20 H7" stroke="#fff" stroke-width="1.6"/>
<rect x="0" y="0.5" width="2.2" height="25" fill="#222"/><path d="M1.1 1 V25" stroke="#fff" stroke-width="0.8" stroke-dasharray="0.8 1.2"/>
<path d="M21 6 H31 V32 H21Z" fill="#cdcdcd" stroke="#333" stroke-width="0.7"/>
<path d="M24 12 H28 M24 19 H28" stroke="#fff" stroke-width="1.6"/>
<rect x="29.5" y="6" width="2.2" height="26" fill="#222"/><path d="M30.6 7 V31" stroke="#fff" stroke-width="0.8" stroke-dasharray="0.8 1.2"/>
<path d="M2.6 0.3 H19.7 L21.3 4.3 L23 19.3 L29.7 22.7 L28 29.3 L21.3 31.8 L13 29.3 L11.3 21 L10.5 9.3 L8 1.8Z" fill="url(#fg0)" stroke="#222" stroke-width="1.1"/>
<path d="M9.5 6 L21.5 4.5 M11 17 L22.5 15 M13 25 L25 21" stroke="#222" stroke-width="1"/></svg>
<svg style="left:795px;top:96px" width="34" height="34" viewBox="0 0 34 34" ><defs><linearGradient id="fg1" x1="0" y1="0" x2="1" y2="1"><stop offset="0" stop-color="#eee"/><stop offset="0.5" stop-color="#eee" stop-opacity="0.85"/><stop offset="1" stop-color="#eee"/></linearGradient></defs>
<path d="M1.5 2 H12 V26 H1.5Z" fill="#cdcdcd" stroke="#333" stroke-width="0.7"/>
<path d="M3 7 H7 M3 14 H7 M3 20 H7" stroke="#fff" stroke-width="1.6"/>
<rect x="0" y="0.5" width="2.2" height="25" fill="#222"/><path d="M1.1 1 V25" stroke="#fff" stroke-width="0.8" stroke-dasharray="0.8 1.2"/>
<path d="M21 6 H31 V32 H21Z" fill="#cdcdcd" stroke="#333" stroke-width="0.7"/>
<path d="M24 12 H28 M24 19 H28" stroke="#fff" stroke-width="1.6"/>
<rect x="29.5" y="6" width="2.2" height="26" fill="#222"/><path d="M30.6 7 V31" stroke="#fff" stroke-width="0.8" stroke-dasharray="0.8 1.2"/>
<path d="M2.6 0.3 H19.7 L21.3 4.3 L23 19.3 L29.7 22.7 L28 29.3 L21.3 31.8 L13 29.3 L11.3 21 L10.5 9.3 L8 1.8Z" fill="url(#fg1)" stroke="#333" stroke-width="1.1"/>
<path d="M9.5 6 L21.5 4.5 M11 17 L22.5 15 M13 25 L25 21" stroke="#333" stroke-width="1"/></svg>
<svg style="left:840px;top:96px" width="34" height="34" viewBox="0 0 34 34" ><defs><linearGradient id="fg2" x1="0" y1="0" x2="0" y2="1"><stop offset="0" stop-color="#e81020"/><stop offset="0.25" stop-color="#e81020"/><stop offset="0.25" stop-color="#10d040"/><stop offset="0.56" stop-color="#10d040"/><stop offset="0.56" stop-color="#3090f0"/><stop offset="1" stop-color="#3090f0"/></linearGradient></defs>
<path d="M1.5 2 H12 V26 H1.5Z" fill="#cdcdcd" stroke="#333" stroke-width="0.7"/>
<path d="M3 7 H7 M3 14 H7 M3 20 H7" stroke="#fff" stroke-width="1.6"/>
<rect x="0" y="0.5" width="2.2" height="25" fill="#222"/><path d="M1.1 1 V25" stroke="#fff" stroke-width="0.8" stroke-dasharray="0.8 1.2"/>
<path d="M21 6 H31 V32 H21Z" fill="#cdcdcd" stroke="#333" stroke-width="0.7"/>
<path d="M24 12 H28 M24 19 H28" stroke="#fff" stroke-width="1.6"/>
<rect x="29.5" y="6" width="2.2" height="26" fill="#222"/><path d="M30.6 7 V31" stroke="#fff" stroke-width="0.8" stroke-dasharray="0.8 1.2"/>
<path d="M2.6 0.3 H19.7 L21.3 4.3 L23 19.3 L29.7 22.7 L28 29.3 L21.3 31.8 L13 29.3 L11.3 21 L10.5 9.3 L8 1.8Z" fill="url(#fg2)" stroke="#222" stroke-width="1.1"/>
<path d="M9.5 6 L21.5 4.5 M11 17 L22.5 15 M13 25 L25 21" stroke="#222" stroke-width="1"/></svg>
<svg style="left:879px;top:96px" width="34" height="34" viewBox="0 0 34 34" ><defs><linearGradient id="fg3" x1="0" y1="0" x2="0" y2="1"><stop offset="0" stop-color="#e81020"/><stop offset="0.25" stop-color="#e81020"/><stop offset="0.25" stop-color="#10d040"/><stop offset="0.56" stop-color="#10d040"/><stop offset="0.56" stop-color="#3090f0"/><stop offset="1" stop-color="#3090f0"/></linearGradient></defs>
<path d="M1.5 2 H12 V26 H1.5Z" fill="#cdcdcd" stroke="#333" stroke-width="0.7"/>
<path d="M3 7 H7 M3 14 H7 M3 20 H7" stroke="#fff" stroke-width="1.6"/>
<rect x="0" y="0.5" width="2.2" height="25" fill="#222"/><path d="M1.1 1 V25" stroke="#fff" stroke-width="0.8" stroke-dasharray="0.8 1.2"/>
<path d="M21 6 H31 V32 H21Z" fill="#cdcdcd" stroke="#333" stroke-width="0.7"/>
<path d="M24 12 H28 M24 19 H28" stroke="#fff" stroke-width="1.6"/>
<rect x="29.5" y="6" width="2.2" height="26" fill="#222"/><path d="M30.6 7 V31" stroke="#fff" stroke-width="0.8" stroke-dasharray="0.8 1.2"/>
<path d="M2.6 0.3 H19.7 L21.3 4.3 L23 19.3 L29.7 22.7 L28 29.3 L21.3 31.8 L13 29.3 L11.3 21 L10.5 9.3 L8 1.8Z" fill="url(#fg3)" stroke="#222" stroke-width="1.1"/>
<path d="M9.5 6 L21.5 4.5 M11 17 L22.5 15 M13 25 L25 21" stroke="#222" stroke-width="1"/></svg>
<svg style="left:918px;top:96px" width="32" height="32" viewBox="0 0 32 32" ><defs><radialGradient id="pu" cx="0.5" cy="0.5" r="0.7"><stop offset="0" stop-color="#e0a0ff"/><stop offset="0.3" stop-color="#a050e8"/><stop offset="0.65" stop-color="#4a18a0"/><stop offset="1" stop-color="#100418"/></radialGradient></defs><rect width="32" height="32" fill="url(#pu)"/><ellipse cx="16" cy="16" rx="4.5" ry="6" fill="#d060b0" stroke="#fff" stroke-width="1.5"/><path d="M12 16 H20" stroke="#f0b0f0" stroke-width="1"/></svg>
<div class="a" style="left:960px;top:92px;width:283px;height:40px;border-radius:4px;background:linear-gradient(#f5f7fb 0%,#eef1f7 55%,#dde2ea 88%,#c9d0da 100%);border-bottom:1px solid #b4bcc8"></div>
<div class="a" style="left:965px;top:98px;width:2px;height:2px;background:#8fa1bd"></div>
<div class="a" style="left:965px;top:102px;width:2px;height:2px;background:#8fa1bd"></div>
<div class="a" style="left:965px;top:106px;width:2px;height:2px;background:#8fa1bd"></div>
<div class="a" style="left:965px;top:110px;width:2px;height:2px;background:#8fa1bd"></div>
<div class="a" style="left:965px;top:114px;width:2px;height:2px;background:#8fa1bd"></div>
<div class="a" style="left:965px;top:118px;width:2px;height:2px;background:#8fa1bd"></div>
<div class="a" style="left:965px;top:122px;width:2px;height:2px;background:#8fa1bd"></div>
<svg style="left:972px;top:96px" width="34" height="34" viewBox="0 0 34 34" ><defs><linearGradient id="fg10" x1="0" y1="0" x2="1" y2="1"><stop offset="0" stop-color="#f01020"/><stop offset="0.5" stop-color="#f01020" stop-opacity="0.85"/><stop offset="1" stop-color="#f01020"/></linearGradient></defs>
<path d="M1.5 2 H12 V26 H1.5Z" fill="#cdcdcd" stroke="#333" stroke-width="0.7"/>
<path d="M3 7 H7 M3 14 H7 M3 20 H7" stroke="#fff" stroke-width="1.6"/>
<rect x="0" y="0.5" width="2.2" height="25" fill="#222"/><path d="M1.1 1 V25" stroke="#fff" stroke-width="0.8" stroke-dasharray="0.8 1.2"/>
<path d="M21 6 H31 V32 H21Z" fill="#cdcdcd" stroke="#333" stroke-width="0.7"/>
<path d="M24 12 H28 M24 19 H28" stroke="#fff" stroke-width="1.6"/>
<rect x="29.5" y="6" width="2.2" height="26" fill="#222"/><path d="M30.6 7 V31" stroke="#fff" stroke-width="0.8" stroke-dasharray="0.8 1.2"/>
<path d="M2.6 0.3 H19.7 L21.3 4.3 L23 19.3 L29.7 22.7 L28 29.3 L21.3 31.8 L13 29.3 L11.3 21 L10.5 9.3 L8 1.8Z" fill="url(#fg10)" stroke="#222" stroke-width="1.1"/>
<path d="M9.5 6 L21.5 4.5 M11 17 L22.5 15 M13 25 L25 21" stroke="#222" stroke-width="1"/></svg>
<svg style="left:1011px;top:96px" width="34" height="34" viewBox="0 0 34 34" ><defs><linearGradient id="fg11" x1="0" y1="0" x2="1" y2="1"><stop offset="0" stop-color="#10d040"/><stop offset="0.5" stop-color="#10d040" stop-opacity="0.85"/><stop offset="1" stop-color="#10d040"/></linearGradient></defs>
<path d="M1.5 2 H12 V26 H1.5Z" fill="#cdcdcd" stroke="#333" stroke-width="0.7"/>
<path d="M3 7 H7 M3 14 H7 M3 20 H7" stroke="#fff" stroke-width="1.6"/>
<rect x="0" y="0.5" width="2.2" height="25" fill="#222"/><path d="M1.1 1 V25" stroke="#fff" stroke-width="0.8" stroke-dasharray="0.8 1.2"/>
<path d="M21 6 H31 V32 H21Z" fill="#cdcdcd" stroke="#333" stroke-width="0.7"/>
<path d="M24 12 H28 M24 19 H28" stroke="#fff" stroke-width="1.6"/>
<rect x="29.5" y="6" width="2.2" height="26" fill="#222"/><path d="M30.6 7 V31" stroke="#fff" stroke-width="0.8" stroke-dasharray="0.8 1.2"/>
<path d="M2.6 0.3 H19.7 L21.3 4.3 L23 19.3 L29.7 22.7 L28 29.3 L21.3 31.8 L13 29.3 L11.3 21 L10.5 9.3 L8 1.8Z" fill="url(#fg11)" stroke="#222" stroke-width="1.1"/>
<path d="M9.5 6 L21.5 4.5 M11 17 L22.5 15 M13 25 L25 21" stroke="#222" stroke-width="1"/></svg>
<svg style="left:1051px;top:96px" width="34" height="34" viewBox="0 0 34 34" ><defs><linearGradient id="fg12" x1="0" y1="0" x2="1" y2="1"><stop offset="0" stop-color="#2060f0"/><stop offset="0.5" stop-color="#2060f0" stop-opacity="0.85"/><stop offset="1" stop-color="#2060f0"/></linearGradient></defs>
<path d="M1.5 2 H12 V26 H1.5Z" fill="#cdcdcd" stroke="#333" stroke-width="0.7"/>
<path d="M3 7 H7 M3 14 H7 M3 20 H7" stroke="#fff" stroke-width="1.6"/>
<rect x="0" y="0.5" width="2.2" height="25" fill="#222"/><path d="M1.1 1 V25" stroke="#fff" stroke-width="0.8" stroke-dasharray="0.8 1.2"/>
<path d="M21 6 H31 V32 H21Z" fill="#cdcdcd" stroke="#333" stroke-width="0.7"/>
<path d="M24 12 H28 M24 19 H28" stroke="#fff" stroke-width="1.6"/>
<rect x="29.5" y="6" width="2.2" height="26" fill="#222"/><path d="M30.6 7 V31" stroke="#fff" stroke-width="0.8" stroke-dasharray="0.8 1.2"/>
<path d="M2.6 0.3 H19.7 L21.3 4.3 L23 19.3 L29.7 22.7 L28 29.3 L21.3 31.8 L13 29.3 L11.3 21 L10.5 9.3 L8 1.8Z" fill="url(#fg12)" stroke="#222" stroke-width="1.1"/>
<path d="M9.5 6 L21.5 4.5 M11 17 L22.5 15 M13 25 L25 21" stroke="#222" stroke-width="1"/></svg>
<svg style="left:1090px;top:96px" width="34" height="34" viewBox="0 0 34 34" ><defs><linearGradient id="fg13" x1="0" y1="0" x2="1" y2="1"><stop offset="0" stop-color="#f0f020"/><stop offset="0.5" stop-color="#f0f020" stop-opacity="0.85"/><stop offset="1" stop-color="#f0f020"/></linearGradient></defs>
<path d="M1.5 2 H12 V26 H1.5Z" fill="#cdcdcd" stroke="#333" stroke-width="0.7"/>
<path d="M3 7 H7 M3 14 H7 M3 20 H7" stroke="#fff" stroke-width="1.6"/>
<rect x="0" y="0.5" width="2.2" height="25" fill="#222"/><path d="M1.1 1 V25" stroke="#fff" stroke-width="0.8" stroke-dasharray="0.8 1.2"/>
<path d="M21 6 H31 V32 H21Z" fill="#cdcdcd" stroke="#333" stroke-width="0.7"/>
<path d="M24 12 H28 M24 19 H28" stroke="#fff" stroke-width="1.6"/>
<rect x="29.5" y="6" width="2.2" height="26" fill="#222"/><path d="M30.6 7 V31" stroke="#fff" stroke-width="0.8" stroke-dasharray="0.8 1.2"/>
<path d="M2.6 0.3 H19.7 L21.3 4.3 L23 19.3 L29.7 22.7 L28 29.3 L21.3 31.8 L13 29.3 L11.3 21 L10.5 9.3 L8 1.8Z" fill="url(#fg13)" stroke="#222" stroke-width="1.1"/>
<path d="M9.5 6 L21.5 4.5 M11 17 L22.5 15 M13 25 L25 21" stroke="#222" stroke-width="1"/></svg>
<svg style="left:1129px;top:96px" width="34" height="34" viewBox="0 0 34 34" ><defs><linearGradient id="fg14" x1="0" y1="0" x2="1" y2="1"><stop offset="0" stop-color="#30d8f0"/><stop offset="0.5" stop-color="#30d8f0" stop-opacity="0.85"/><stop offset="1" stop-color="#30d8f0"/></linearGradient></defs>
<path d="M1.5 2 H12 V26 H1.5Z" fill="#cdcdcd" stroke="#333" stroke-width="0.7"/>
<path d="M3 7 H7 M3 14 H7 M3 20 H7" stroke="#fff" stroke-width="1.6"/>
<rect x="0" y="0.5" width="2.2" height="25" fill="#222"/><path d="M1.1 1 V25" stroke="#fff" stroke-width="0.8" stroke-dasharray="0.8 1.2"/>
<path d="M21 6 H31 V32 H21Z" fill="#cdcdcd" stroke="#333" stroke-width="0.7"/>
<path d="M24 12 H28 M24 19 H28" stroke="#fff" stroke-width="1.6"/>
<rect x="29.5" y="6" width="2.2" height="26" fill="#222"/><path d="M30.6 7 V31" stroke="#fff" stroke-width="0.8" stroke-dasharray="0.8 1.2"/>
<path d="M2.6 0.3 H19.7 L21.3 4.3 L23 19.3 L29.7 22.7 L28 29.3 L21.3 31.8 L13 29.3 L11.3 21 L10.5 9.3 L8 1.8Z" fill="url(#fg14)" stroke="#222" stroke-width="1.1"/>
<path d="M9.5 6 L21.5 4.5 M11 17 L22.5 15 M13 25 L25 21" stroke="#222" stroke-width="1"/></svg>
<svg style="left:1168px;top:96px" width="34" height="34" viewBox="0 0 34 34" ><defs><linearGradient id="fg15" x1="0" y1="0" x2="1" y2="1"><stop offset="0" stop-color="#a020d0"/><stop offset="0.5" stop-color="#a020d0" stop-opacity="0.85"/><stop offset="1" stop-color="#a020d0"/></linearGradient></defs>
<path d="M1.5 2 H12 V26 H1.5Z" fill="#cdcdcd" stroke="#333" stroke-width="0.7"/>
<path d="M3 7 H7 M3 14 H7 M3 20 H7" stroke="#fff" stroke-width="1.6"/>
<rect x="0" y="0.5" width="2.2" height="25" fill="#222"/><path d="M1.1 1 V25" stroke="#fff" stroke-width="0.8" stroke-dasharray="0.8 1.2"/>
<path d="M21 6 H31 V32 H21Z" fill="#cdcdcd" stroke="#333" stroke-width="0.7"/>
<path d="M24 12 H28 M24 19 H28" stroke="#fff" stroke-width="1.6"/>
<rect x="29.5" y="6" width="2.2" height="26" fill="#222"/><path d="M30.6 7 V31" stroke="#fff" stroke-width="0.8" stroke-dasharray="0.8 1.2"/>
<path d="M2.6 0.3 H19.7 L21.3 4.3 L23 19.3 L29.7 22.7 L28 29.3 L21.3 31.8 L13 29.3 L11.3 21 L10.5 9.3 L8 1.8Z" fill="url(#fg15)" stroke="#222" stroke-width="1.1"/>
<path d="M9.5 6 L21.5 4.5 M11 17 L22.5 15 M13 25 L25 21" stroke="#222" stroke-width="1"/></svg>
<svg style="left:1207px;top:96px" width="34" height="34" viewBox="0 0 34 34" ><defs><linearGradient id="fg16" x1="0" y1="0" x2="0" y2="1"><stop offset="0" stop-color="#e81020"/><stop offset="0.25" stop-color="#e81020"/><stop offset="0.25" stop-color="#10d040"/><stop offset="0.56" stop-color="#10d040"/><stop offset="0.56" stop-color="#3090f0"/><stop offset="1" stop-color="#3090f0"/></linearGradient></defs>
<path d="M1.5 2 H12 V26 H1.5Z" fill="#cdcdcd" stroke="#333" stroke-width="0.7"/>
<path d="M3 7 H7 M3 14 H7 M3 20 H7" stroke="#fff" stroke-width="1.6"/>
<rect x="0" y="0.5" width="2.2" height="25" fill="#222"/><path d="M1.1 1 V25" stroke="#fff" stroke-width="0.8" stroke-dasharray="0.8 1.2"/>
<path d="M21 6 H31 V32 H21Z" fill="#cdcdcd" stroke="#333" stroke-width="0.7"/>
<path d="M24 12 H28 M24 19 H28" stroke="#fff" stroke-width="1.6"/>
<rect x="29.5" y="6" width="2.2" height="26" fill="#222"/><path d="M30.6 7 V31" stroke="#fff" stroke-width="0.8" stroke-dasharray="0.8 1.2"/>
<path d="M2.6 0.3 H19.7 L21.3 4.3 L23 19.3 L29.7 22.7 L28 29.3 L21.3 31.8 L13 29.3 L11.3 21 L10.5 9.3 L8 1.8Z" fill="url(#fg16)" stroke="#222" stroke-width="1.1"/>
<path d="M9.5 6 L21.5 4.5 M11 17 L22.5 15 M13 25 L25 21" stroke="#222" stroke-width="1"/></svg>
<div class="a" style="left:0px;top:137px;width:1920px;height:903px;background:#f0f0f0"></div>
<div class="a" style="left:0px;top:137px;width:2px;height:885px;background:#8a8a8a"></div>
<div class="a" style="left:0px;top:198px;width:1900px;height:3px;background:#7c7c7c"></div>
<div class="a" style="left:0px;top:423px;width:1900px;height:4px;background:#8a8a8a"></div>
<div class="a" style="left:1305px;top:137px;width:4px;height:62px;background:#8a8a8a"></div>
<div class="a" style="left:1811px;top:201px;width:3px;height:222px;background:#8a8a8a"></div>
<div class="a" style="left:384px;top:427px;width:4px;height:594px;background:#8a8a8a"></div>
<div class="a" style="left:1897px;top:137px;width:4px;height:885px;background:#8a8a8a"></div>
<div class="a" style="left:3px;top:138px;width:1304px;height:61px;background:#fff"></div>
<div class="a" style="left:5px;top:140px;width:1300px;height:57px;border:2px solid #7a7a7a;background:#eaeaea"></div>
<div class="a" style="left:7px;top:141px;width:1296px;height:17px;background:linear-gradient(90deg,#e3eaf5,#ebf0f8 60%,#e6ecf6);border-radius:7px 7px 0 0;border-bottom:1px solid #a0a0a0"></div>
<div class="t" style="left:12px;top:144px;font-size:12.5px;font-weight:bold;color:#3c3c3c">View</div>
<div class="a" style="left:7px;top:163px;width:198px;height:22px;background:#fff;border-top:2px solid #696969;border-left:2px solid #696969;border-right:1px solid #e0e0e0;border-bottom:1px solid #e0e0e0"></div>
<div class="t" style="left:11px;top:169px;font-size:13.6px">Near black scale</div>
<div class="a" style="left:188px;top:166px;width:16px;height:17px;background:#f0f0f0;border-right:1px solid #696969;border-bottom:1px solid #696969;border-top:1px solid #fff;border-left:1px solid #fff"></div>
<svg style="left:192px;top:172px" width="8" height="5" viewBox="0 0 8 5" ><path d="M0 0 H8 L4 5Z" fill="#000"/></svg>
<div class="a" style="left:216px;top:161px;width:1056px;height:27px;background:#f0f0f0;border-top:1px solid #a0a0a0;border-left:1px solid #a0a0a0"></div>
<div class="t" style="left:218px;top:163px;font-size:16px;font-weight:bold;letter-spacing:0.01px">Color Space: HDTV Rec709 , White Point: D65, EOTF: &nbsp;SDR, Power law (black compensation) w/gamma = 2.40, # of measures: 0 [20:21:56]</div>
<div class="a" style="left:1278px;top:163px;width:17px;height:12px;background:#f0f0f0;border-top:1px solid #fff;border-left:1px solid #fff;border-right:1px solid #808080;border-bottom:1px solid #808080"></div>
<div class="a" style="left:1278px;top:176px;width:17px;height:12px;background:#f0f0f0;border-top:1px solid #fff;border-left:1px solid #fff;border-right:1px solid #808080;border-bottom:1px solid #808080"></div>
<svg style="left:1283px;top:167px" width="7" height="4" viewBox="0 0 7 4" ><path d="M0 4 H7 L3.5 0Z" fill="#000"/></svg>
<svg style="left:1283px;top:180px" width="7" height="4" viewBox="0 0 7 4" ><path d="M0 0 H7 L3.5 4Z" fill="#000"/></svg>
<div class="a" style="left:1309px;top:138px;width:309px;height:61px;background:#fff"></div>
<div class="a" style="left:1311px;top:140px;width:305px;height:57px;border:2px solid #7a7a7a;background:#eaeaea"></div>
<div class="a" style="left:1313px;top:141px;width:301px;height:17px;background:linear-gradient(90deg,#e3eaf5,#ebf0f8 60%,#e6ecf6);border-radius:7px 7px 0 0;border-bottom:1px solid #a0a0a0"></div>
<div class="t" style="left:1318px;top:144px;font-size:12.5px;font-weight:bold;color:#3c3c3c">Sensor</div>
<div class="t" style="left:1316px;top:160px;font-size:14px">Simulated sensor</div>
<div class="a" style="left:1316px;top:178px;width:68px;height:17px;background:#efefef"></div>
<div class="t" style="left:1318px;top:177px;font-size:14px">Adaptive</div>
<svg style="left:1424px;top:178px" width="12" height="12" viewBox="0 0 12 12" ><path d="M0 0 L12 6 L0 12Z" fill="#4cc44c"/></svg>
<svg style="left:1589px;top:175px" width="18" height="18" viewBox="0 0 18 18" ><defs><linearGradient id="ed" x1="0" y1="0" x2="1" y2="1"><stop offset="0" stop-color="#ffffff"/><stop offset="1" stop-color="#9cc4f0"/></linearGradient></defs><path d="M1.5 3 L11 1 L13 15 L3.5 17.5Z" fill="url(#ed)" stroke="#1f4fa0" stroke-width="2"/><path d="M5 9 L7 12 L10 7" stroke="#c8a020" stroke-width="1.3" fill="none"/><path d="M8 12 L15 6" stroke="#3070c0" stroke-width="2"/><circle cx="15.5" cy="5.5" r="1.3" fill="#e03030"/></svg>
<div class="a" style="left:1619px;top:138px;width:124px;height:61px;background:#fff"></div>
<div class="a" style="left:1621px;top:140px;width:120px;height:57px;border:2px solid #7a7a7a;background:#eaeaea"></div>
<div class="a" style="left:1623px;top:141px;width:116px;height:17px;background:linear-gradient(90deg,#e3eaf5,#ebf0f8 60%,#e6ecf6);border-radius:7px 7px 0 0;border-bottom:1px solid #a0a0a0"></div>
<div class="t" style="left:1628px;top:144px;font-size:12.5px;font-weight:bold;color:#3c3c3c">Generator</div>
<div class="t" style="left:1625px;top:160px;font-size:14px">GDI</div>
<svg style="left:1718px;top:175px" width="18" height="18" viewBox="0 0 18 18" ><defs><linearGradient id="ed" x1="0" y1="0" x2="1" y2="1"><stop offset="0" stop-color="#ffffff"/><stop offset="1" stop-color="#9cc4f0"/></linearGradient></defs><path d="M1.5 3 L11 1 L13 15 L3.5 17.5Z" fill="url(#ed)" stroke="#1f4fa0" stroke-width="2"/><path d="M5 9 L7 12 L10 7" stroke="#c8a020" stroke-width="1.3" fill="none"/><path d="M8 12 L15 6" stroke="#3070c0" stroke-width="2"/><circle cx="15.5" cy="5.5" r="1.3" fill="#e03030"/></svg>
<div class="a" style="left:1744px;top:138px;width:154px;height:61px;background:#fff"></div>
<div class="a" style="left:1746px;top:140px;width:150px;height:57px;border:2px solid #7a7a7a;background:#eaeaea"></div>
<div class="a" style="left:1748px;top:141px;width:146px;height:17px;background:linear-gradient(90deg,#e3eaf5,#ebf0f8 60%,#e6ecf6);border-radius:7px 7px 0 0;border-bottom:1px solid #a0a0a0"></div>
<div class="t" style="left:1753px;top:144px;font-size:12.5px;font-weight:bold;color:#3c3c3c">Parameters</div>
<div class="a" style="left:1755px;top:162px;width:12px;height:12px;background:#fff;border-top:1px solid #696969;border-left:1px solid #696969;border-right:1px solid #e0e0e0;border-bottom:1px solid #e0e0e0"></div>
<div class="t" style="left:1774px;top:161px;font-size:14px">Reference</div>
<div class="a" style="left:1755px;top:179px;width:12px;height:12px;background:#f0f0f0;border-top:1px solid #b0b0b0;border-left:1px solid #b0b0b0;border-right:1px solid #eaeaea;border-bottom:1px solid #eaeaea"></div>
<div class="t" style="left:1774px;top:178px;font-size:14px;color:#a8a8a8">XYZ Adjustment</div>
<div class="a" style="left:3px;top:203px;width:1809px;height:220px;background:#fff"></div>
<div class="a" style="left:5px;top:205px;width:1805px;height:216px;border:2px solid #7a7a7a;background:#eaeaea"></div>
<div class="a" style="left:7px;top:206px;width:1801px;height:17px;background:linear-gradient(90deg,#e3eaf5,#ebf0f8 60%,#e6ecf6);border-radius:7px 7px 0 0;border-bottom:1px solid #a0a0a0"></div>
<div class="a" style="left:6px;top:206px;width:1803px;height:214px;border:1px solid #00d800;border-top:none;border-radius:0 7px 0 0"></div>
<div class="t" style="left:12px;top:209px;font-size:11px;font-weight:bold;color:#3c3c3c">( Average dE: 0.57 [0.08,0.55,0.00] max: 0.80 [CIE2000] ) [Absolute Y w/gamma]</div>
<div class="a" style="left:9px;top:220px;width:1781px;height:197px;background:#f0f0f0;border-top:1px solid #696969;border-left:1px solid #696969;border-right:1px solid #fff;border-bottom:1px solid #fff"></div>
<div class="a" style="left:10px;top:221px;width:56px;height:23px;background:#f0f0f0;border-right:1px solid #696969;border-bottom:1px solid #696969"></div>
<div class="t" style="left:10px;top:225.5px;font-size:12px;font-weight:bold;width:56px;text-align:center">% White</div>
<div class="a" style="left:66px;top:221px;width:343px;height:23px;background:#808080;border-right:1px solid #fff;border-bottom:1px solid #606060"></div>
<div class="t" style="left:66px;top:227px;font-size:12px;font-weight:bold;width:343px;text-align:center">0</div>
<div class="a" style="left:409px;top:221px;width:338px;height:23px;background:#9a9a9a;border-right:1px solid #fff;border-bottom:1px solid #606060"></div>
<div class="t" style="left:409px;top:227px;font-size:12px;font-weight:bold;width:338px;text-align:center">1</div>
<div class="a" style="left:747px;top:221px;width:344px;height:23px;background:#b3b3b3;border-right:1px solid #fff;border-bottom:1px solid #606060"></div>
<div class="t" style="left:747px;top:227px;font-size:12px;font-weight:bold;width:344px;text-align:center">2</div>
<div class="a" style="left:1091px;top:221px;width:343px;height:23px;background:#cbcbcb;border-right:1px solid #fff;border-bottom:1px solid #606060"></div>
<div class="t" style="left:1091px;top:227px;font-size:12px;font-weight:bold;width:343px;text-align:center">3</div>
<div class="a" style="left:1434px;top:221px;width:337px;height:23px;background:#e0e0e0;border-right:1px solid #fff;border-bottom:1px solid #606060"></div>
<div class="t" style="left:1434px;top:227px;font-size:12px;font-weight:bold;width:337px;text-align:center">4</div>
<div class="a" style="left:10px;top:244px;width:56px;height:26px;background:#f0f0f0;border-right:1px solid #696969;border-bottom:1px solid #696969"></div>
<div class="t" style="left:10px;top:250.0px;font-size:12px;font-weight:bold;width:56px;text-align:center">x</div>
<div class="a" style="left:66px;top:244px;width:343px;height:26px;background:#fff;border-right:1px solid #a0a0a0;border-bottom:1px solid #a0a0a0"></div>
<div class="t" style="left:66px;top:252.5px;font-size:11.3px;width:341px;text-align:right">0.2324</div>
<div class="a" style="left:409px;top:244px;width:338px;height:26px;background:#fff;border-right:1px solid #a0a0a0;border-bottom:1px solid #a0a0a0"></div>
<div class="t" style="left:409px;top:252.5px;font-size:11.3px;width:336px;text-align:right">0.2388</div>
<div class="a" style="left:747px;top:244px;width:344px;height:26px;background:#fff;border-right:1px solid #a0a0a0;border-bottom:1px solid #a0a0a0"></div>
<div class="t" style="left:747px;top:252.5px;font-size:11.3px;width:342px;text-align:right">0.2576</div>
<div class="a" style="left:1091px;top:244px;width:343px;height:26px;background:#fff;border-right:1px solid #a0a0a0;border-bottom:1px solid #a0a0a0"></div>
<div class="t" style="left:1091px;top:252.5px;font-size:11.3px;width:341px;text-align:right">0.2869</div>
<div class="a" style="left:1434px;top:244px;width:337px;height:26px;background:#fff;border-right:1px solid #a0a0a0;border-bottom:1px solid #a0a0a0"></div>
<div class="t" style="left:1434px;top:252.5px;font-size:11.3px;width:335px;text-align:right">0.3007</div>
<div class="a" style="left:10px;top:270px;width:56px;height:26px;background:#f0f0f0;border-right:1px solid #696969;border-bottom:1px solid #696969"></div>
<div class="t" style="left:10px;top:276.0px;font-size:12px;font-weight:bold;width:56px;text-align:center">y</div>
<div class="a" style="left:66px;top:270px;width:343px;height:26px;background:#fff;border-right:1px solid #a0a0a0;border-bottom:1px solid #a0a0a0"></div>
<div class="t" style="left:66px;top:278.5px;font-size:11.3px;width:341px;text-align:right">0.1920</div>
<div class="a" style="left:409px;top:270px;width:338px;height:26px;background:#fff;border-right:1px solid #a0a0a0;border-bottom:1px solid #a0a0a0"></div>
<div class="t" style="left:409px;top:278.5px;font-size:11.3px;width:336px;text-align:right">0.2042</div>
<div class="a" style="left:747px;top:270px;width:344px;height:26px;background:#fff;border-right:1px solid #a0a0a0;border-bottom:1px solid #a0a0a0"></div>
<div class="t" style="left:747px;top:278.5px;font-size:11.3px;width:342px;text-align:right">0.2384</div>
<div class="a" style="left:1091px;top:270px;width:343px;height:26px;background:#fff;border-right:1px solid #a0a0a0;border-bottom:1px solid #a0a0a0"></div>
<div class="t" style="left:1091px;top:278.5px;font-size:11.3px;width:341px;text-align:right">0.2869</div>
<div class="a" style="left:1434px;top:270px;width:337px;height:26px;background:#fff;border-right:1px solid #a0a0a0;border-bottom:1px solid #a0a0a0"></div>
<div class="t" style="left:1434px;top:278.5px;font-size:11.3px;width:335px;text-align:right">0.3107</div>
<div class="a" style="left:10px;top:296px;width:56px;height:26px;background:#f0f0f0;border-right:1px solid #696969;border-bottom:1px solid #696969"></div>
<div class="t" style="left:10px;top:302.0px;font-size:12px;font-weight:bold;width:56px;text-align:center">Y</div>
<div class="a" style="left:66px;top:296px;width:343px;height:26px;background:#fff;border-right:1px solid #a0a0a0;border-bottom:1px solid #a0a0a0"></div>
<div class="t" style="left:66px;top:304.5px;font-size:11.3px;width:341px;text-align:right">0.035</div>
<div class="a" style="left:409px;top:296px;width:338px;height:26px;background:#fff;border-right:1px solid #a0a0a0;border-bottom:1px solid #a0a0a0"></div>
<div class="t" style="left:409px;top:304.5px;font-size:11.3px;width:336px;text-align:right">0.039</div>
<div class="a" style="left:747px;top:296px;width:344px;height:26px;background:#fff;border-right:1px solid #a0a0a0;border-bottom:1px solid #a0a0a0"></div>
<div class="t" style="left:747px;top:304.5px;font-size:11.3px;width:342px;text-align:right">0.053</div>
<div class="a" style="left:1091px;top:296px;width:343px;height:26px;background:#fff;border-right:1px solid #a0a0a0;border-bottom:1px solid #a0a0a0"></div>
<div class="t" style="left:1091px;top:304.5px;font-size:11.3px;width:341px;text-align:right">0.096</div>
<div class="a" style="left:1434px;top:296px;width:337px;height:26px;background:#fff;border-right:1px solid #a0a0a0;border-bottom:1px solid #a0a0a0"></div>
<div class="t" style="left:1434px;top:304.5px;font-size:11.3px;width:335px;text-align:right">0.141</div>
<div class="a" style="left:10px;top:322px;width:56px;height:26px;background:#f0f0f0;border-right:1px solid #696969;border-bottom:1px solid #696969"></div>
<div class="t" style="left:10px;top:328.0px;font-size:12px;font-weight:bold;width:56px;text-align:center">Delta E</div>
<div class="a" style="left:66px;top:322px;width:343px;height:26px;background:#e0e0e0;border-right:1px solid #a0a0a0;border-bottom:1px solid #a0a0a0"></div>
<div class="a" style="left:409px;top:322px;width:338px;height:26px;background:#aefca6;border-right:1px solid #a0a0a0;border-bottom:1px solid #a0a0a0"></div>
<div class="t" style="left:409px;top:330.5px;font-weight:bold;font-size:12px;width:336px;text-align:right">0.8</div>
<div class="a" style="left:747px;top:322px;width:344px;height:26px;background:#aefca6;border-right:1px solid #a0a0a0;border-bottom:1px solid #a0a0a0"></div>
<div class="t" style="left:747px;top:330.5px;font-weight:bold;font-size:12px;width:342px;text-align:right">0.7</div>
<div class="a" style="left:1091px;top:322px;width:343px;height:26px;background:#aefca6;border-right:1px solid #a0a0a0;border-bottom:1px solid #a0a0a0"></div>
<div class="t" style="left:1091px;top:330.5px;font-weight:bold;font-size:12px;width:341px;text-align:right">0.5</div>
<div class="a" style="left:1434px;top:322px;width:337px;height:26px;background:#aefca6;border-right:1px solid #a0a0a0;border-bottom:1px solid #a0a0a0"></div>
<div class="t" style="left:1434px;top:330.5px;font-weight:bold;font-size:12px;width:335px;text-align:right">0.3</div>
<div class="a" style="left:10px;top:348px;width:56px;height:25px;background:#f0f0f0;border-right:1px solid #696969;border-bottom:1px solid #696969"></div>
<div class="t" style="left:10px;top:353.5px;font-size:12px;font-weight:bold;width:56px;text-align:center">delta xy</div>
<div class="a" style="left:66px;top:348px;width:343px;height:25px;background:#f0f0f0;border-right:1px solid #a0a0a0;border-bottom:1px solid #a0a0a0"></div>
<div class="a" style="left:409px;top:348px;width:338px;height:25px;background:#f0f0f0;border-right:1px solid #a0a0a0;border-bottom:1px solid #a0a0a0"></div>
<div class="t" style="left:409px;top:356.0px;font-size:11.3px;width:336px;text-align:right">0.1450</div>
<div class="a" style="left:747px;top:348px;width:344px;height:25px;background:#f0f0f0;border-right:1px solid #a0a0a0;border-bottom:1px solid #a0a0a0"></div>
<div class="t" style="left:747px;top:356.0px;font-size:11.3px;width:342px;text-align:right">0.1060</div>
<div class="a" style="left:1091px;top:348px;width:343px;height:25px;background:#f0f0f0;border-right:1px solid #a0a0a0;border-bottom:1px solid #a0a0a0"></div>
<div class="t" style="left:1091px;top:356.0px;font-size:11.3px;width:341px;text-align:right">0.0494</div>
<div class="a" style="left:1434px;top:348px;width:337px;height:25px;background:#f0f0f0;border-right:1px solid #a0a0a0;border-bottom:1px solid #a0a0a0"></div>
<div class="t" style="left:1434px;top:356.0px;font-size:11.3px;width:335px;text-align:right">0.0219</div>
<div class="a" style="left:10px;top:373px;width:56px;height:25px;background:#f0f0f0;border-right:1px solid #696969;border-bottom:1px solid #696969"></div>
<div class="t" style="left:10px;top:378.5px;font-size:12px;font-weight:bold;width:56px;text-align:center">Y target</div>
<div class="a" style="left:66px;top:373px;width:343px;height:25px;background:#e0e0e0;border-right:1px solid #a0a0a0;border-bottom:1px solid #a0a0a0"></div>
<div class="t" style="left:66px;top:381.0px;font-size:11.3px;width:341px;text-align:right">0.035</div>
<div class="a" style="left:409px;top:373px;width:338px;height:25px;background:#e0e0e0;border-right:1px solid #a0a0a0;border-bottom:1px solid #a0a0a0"></div>
<div class="t" style="left:409px;top:381.0px;font-size:11.3px;width:336px;text-align:right">0.037</div>
<div class="a" style="left:747px;top:373px;width:344px;height:25px;background:#e0e0e0;border-right:1px solid #a0a0a0;border-bottom:1px solid #a0a0a0"></div>
<div class="t" style="left:747px;top:381.0px;font-size:11.3px;width:342px;text-align:right">0.044</div>
<div class="a" style="left:1091px;top:373px;width:343px;height:25px;background:#e0e0e0;border-right:1px solid #a0a0a0;border-bottom:1px solid #a0a0a0"></div>
<div class="t" style="left:1091px;top:381.0px;font-size:11.3px;width:341px;text-align:right">0.069</div>
<div class="a" style="left:1434px;top:373px;width:337px;height:25px;background:#e0e0e0;border-right:1px solid #a0a0a0;border-bottom:1px solid #a0a0a0"></div>
<div class="t" style="left:1434px;top:381.0px;font-size:11.3px;width:335px;text-align:right">0.097</div>
<div class="a" style="left:1790px;top:221px;width:17px;height:1px;background:#00d800"></div>
<div class="a" style="left:1771px;top:221px;width:18px;height:177px;background:#f0f0f0"></div>
<svg style="left:1775px;top:227px" width="9" height="6" viewBox="0 0 9 6" ><path d="M0.5 5.5 L4.5 1 L8.5 5.5" fill="none" stroke="#a0a0a0" stroke-width="1.3"/></svg>
<svg style="left:1775px;top:386px" width="9" height="6" viewBox="0 0 9 6" ><path d="M0.5 0.5 L4.5 5 L8.5 0.5" fill="none" stroke="#a0a0a0" stroke-width="1.3"/></svg>
<svg style="left:15px;top:402px" width="6" height="9" viewBox="0 0 6 9" ><path d="M5.5 0.5 L1 4.5 L5.5 8.5" fill="none" stroke="#a0a0a0" stroke-width="1.3"/></svg>
<svg style="left:1759px;top:402px" width="6" height="9" viewBox="0 0 6 9" ><path d="M0.5 0.5 L5 4.5 L0.5 8.5" fill="none" stroke="#a0a0a0" stroke-width="1.3"/></svg>
<div class="a" style="left:1813px;top:203px;width:85px;height:105px;background:#fff"></div>
<div class="a" style="left:1815px;top:205px;width:81px;height:101px;border:2px solid #7a7a7a;background:#eaeaea"></div>
<div class="a" style="left:1817px;top:206px;width:77px;height:17px;background:linear-gradient(90deg,#e3eaf5,#ebf0f8 60%,#e6ecf6);border-radius:7px 7px 0 0;border-bottom:1px solid #a0a0a0"></div>
<div class="t" style="left:1822px;top:209px;font-size:12.5px;font-weight:bold;color:#3c3c3c">Display</div>
<svg style="left:1822px;top:225px" width="13" height="13" viewBox="0 0 13 13" ><circle cx="6.5" cy="6.5" r="5" fill="#f0f0f0"/><path d="M2.5 10.5 A5.6 5.6 0 0 1 10.5 2.5" fill="none" stroke="#c4c4c4" stroke-width="1.1"/><path d="M3.3 9.7 A4.5 4.5 0 0 1 9.7 3.3" fill="none" stroke="#d8d8d8" stroke-width="1"/></svg>
<div class="t" style="left:1840px;top:225px;font-size:13.5px;color:#a8a8a8">Sensor</div>
<svg style="left:1822px;top:241px" width="13" height="13" viewBox="0 0 13 13" ><circle cx="6.5" cy="6.5" r="5" fill="#fff"/><path d="M2.5 10.5 A5.6 5.6 0 0 1 10.5 2.5" fill="none" stroke="#808080" stroke-width="1.1"/><path d="M3.3 9.7 A4.5 4.5 0 0 1 9.7 3.3" fill="none" stroke="#404040" stroke-width="1"/></svg>
<div class="t" style="left:1840px;top:241px;font-size:13.5px;color:#000">RGB</div>
<svg style="left:1822px;top:257px" width="13" height="13" viewBox="0 0 13 13" ><circle cx="6.5" cy="6.5" r="5" fill="#fff"/><path d="M2.5 10.5 A5.6 5.6 0 0 1 10.5 2.5" fill="none" stroke="#808080" stroke-width="1.1"/><path d="M3.3 9.7 A4.5 4.5 0 0 1 9.7 3.3" fill="none" stroke="#404040" stroke-width="1"/></svg>
<div class="t" style="left:1840px;top:257px;font-size:13.5px;color:#000">XYZ</div>
<svg style="left:1822px;top:273px" width="13" height="13" viewBox="0 0 13 13" ><circle cx="6.5" cy="6.5" r="5" fill="#fff"/><path d="M2.5 10.5 A5.6 5.6 0 0 1 10.5 2.5" fill="none" stroke="#808080" stroke-width="1.1"/><path d="M3.3 9.7 A4.5 4.5 0 0 1 9.7 3.3" fill="none" stroke="#404040" stroke-width="1"/></svg>
<div class="t" style="left:1840px;top:273px;font-size:13.5px;color:#000">xyz</div>
<svg style="left:1822px;top:289px" width="13" height="13" viewBox="0 0 13 13" ><circle cx="6.5" cy="6.5" r="5" fill="#fff"/><path d="M2.5 10.5 A5.6 5.6 0 0 1 10.5 2.5" fill="none" stroke="#808080" stroke-width="1.1"/><path d="M3.3 9.7 A4.5 4.5 0 0 1 9.7 3.3" fill="none" stroke="#404040" stroke-width="1"/><circle cx="6.5" cy="6.5" r="2" fill="#000"/></svg>
<div class="t" style="left:1840px;top:289px;font-size:13.5px;color:#000">xyY</div>
<div class="a" style="left:1812px;top:306px;width:88px;height:117px;background:#888"></div>
<div class="a" style="left:1813px;top:307px;width:82px;height:30px;background:#ececec;border-top:1px solid #fff;border-left:1px solid #fff;border-right:1px solid #a0a0a0;border-bottom:1px solid #a0a0a0"></div>
<div class="t" style="left:1862px;top:316px;font-size:14px">Go</div>
<div class="a" style="left:1813px;top:337px;width:82px;height:29px;background:#ececec;border-top:1px solid #fff;border-left:1px solid #fff;border-right:1px solid #a0a0a0;border-bottom:1px solid #a0a0a0"></div>
<div class="t" style="left:1849px;top:346px;font-size:14px">Delete</div>
<div class="a" style="left:1813px;top:366px;width:82px;height:30px;background:#ececec;border-top:1px solid #fff;border-left:1px solid #fff;border-right:1px solid #a0a0a0;border-bottom:1px solid #a0a0a0"></div>
<div class="t" style="left:1857px;top:375px;font-size:14px">Refs</div>
<svg style="left:1818px;top:309px" width="32" height="27" viewBox="0 0 33 33" preserveAspectRatio="none"><defs><linearGradient id="gof" x1="0" y1="0" x2="1" y2="1"><stop offset="0" stop-color="#2a2a34"/><stop offset="0.5" stop-color="#3a3a4c"/><stop offset="1" stop-color="#22222a"/></linearGradient></defs><path d="M1.5 2 H12 V26 H1.5Z" fill="#d8d8d8" stroke="#333" stroke-width="0.7"/><path d="M3 7 H7 M3 14 H7 M3 20 H7" stroke="#fff" stroke-width="1.6"/><rect x="0" y="0.5" width="2.2" height="25" fill="#222"/><path d="M1.1 1 V25" stroke="#fff" stroke-width="0.8" stroke-dasharray="0.8 1.2"/><path d="M21 6 H31 V32 H21Z" fill="#d8d8d8" stroke="#333" stroke-width="0.7"/><path d="M24 12 H28 M24 19 H28" stroke="#fff" stroke-width="1.6"/><rect x="29.5" y="6" width="2.2" height="26" fill="#222"/><path d="M30.6 7 V31" stroke="#fff" stroke-width="0.8" stroke-dasharray="0.8 1.2"/><path d="M2.6 0.3 H19.7 L21.3 4.3 L23 19.3 L29.7 22.7 L28 29.3 L21.3 31.8 L13 29.3 L11.3 21 L10.5 9.3 L8 1.8Z" fill="url(#gof)" stroke="#111" stroke-width="1.1"/><path d="M9.5 6 L21.5 4.5 M11 17 L22.5 15 M13 25 L25 21" stroke="#111" stroke-width="1"/></svg>
<svg style="left:1819px;top:339px" width="30" height="27" viewBox="0 0 30 27" ><defs><linearGradient id="tr" x1="0" y1="0" x2="1" y2="0"><stop offset="0" stop-color="#7ab8ec"/><stop offset="0.5" stop-color="#d8f4ff"/><stop offset="1" stop-color="#9ccff0"/></linearGradient></defs><path d="M0.5 3 Q14 -1 28 1 L25 22 Q14 27 4 23 Z" fill="url(#tr)" stroke="#5a7a98" stroke-width="0.6"/><path d="M2 4 Q14 0 27 2 Q16 6 2 4Z" fill="#6ab0e8"/><ellipse cx="14" cy="21" rx="10" ry="3.5" fill="#c8ecff" opacity="0.8"/><path d="M14 16 A5.5 5.5 0 0 1 19.5 8 L19 5.5 L24 9 L19.5 12 L19.5 10 A3.5 3.5 0 0 0 16 15Z" fill="#10a010"/><path d="M24 13 A5.5 5.5 0 0 1 18 21 L18.5 23.5 L13.5 20 L18 17 L18 19 A3.5 3.5 0 0 0 22 14Z" fill="#10a010"/></svg>
<svg style="left:1818px;top:371px" width="32" height="23" viewBox="0 0 32 23" ><rect x="0" y="13.300000000000011" width="2" height="9.699999999999989" fill="#ffff00"/><rect x="2" y="11" width="2" height="12" fill="#ffff00"/><rect x="4" y="4.699999999999989" width="4" height="18.30000000000001" fill="#ffff00"/><rect x="8" y="7.5" width="3" height="15.5" fill="#ffff00"/><rect x="11" y="10.399999999999977" width="4" height="12.600000000000023" fill="#ffff00"/><rect x="15" y="1.8000000000000114" width="6" height="21.19999999999999" fill="#ffff00"/><rect x="21" y="4" width="4" height="19" fill="#ffff00"/><rect x="25" y="9.300000000000011" width="7" height="13.699999999999989" fill="#ffff00"/><rect x="0" y="14.50000000000001" width="2" height="8.49999999999999" fill="#000070"/><rect x="2" y="12.2" width="2" height="10.8" fill="#ff00ff"/><rect x="4" y="5.899999999999989" width="4" height="17.100000000000012" fill="#0000ff"/><rect x="8" y="8.7" width="3" height="14.3" fill="#00ffff"/><rect x="11" y="11.599999999999977" width="4" height="11.400000000000023" fill="#00ff00"/><rect x="15" y="3.0000000000000115" width="6" height="19.99999999999999" fill="#ffff00"/><rect x="21" y="5.2" width="4" height="17.8" fill="#700000"/><rect x="25" y="10.50000000000001" width="7" height="12.49999999999999" fill="#ff0000"/></svg>
<div class="a" style="left:1818px;top:401px;width:56px;height:18px;background:#f0f0f0"></div>
<div class="a" style="left:1820px;top:404px;width:12px;height:12px;background:#fff;border-top:1px solid #696969;border-left:1px solid #696969"></div>
<div class="t" style="left:1837px;top:403px;font-size:14px">Edit</div>
<div class="a" style="left:3px;top:428px;width:382px;height:593px;background:#fff"></div>
<div class="a" style="left:5px;top:430px;width:378px;height:589px;border:2px solid #7a7a7a;background:#eaeaea"></div>
<div class="a" style="left:7px;top:431px;width:374px;height:17px;background:linear-gradient(90deg,#e3eaf5,#ebf0f8 60%,#e6ecf6);border-radius:7px 7px 0 0;border-bottom:1px solid #a0a0a0"></div>
<div class="a" style="left:7px;top:1014px;width:374px;height:1px;background:#a0a0a0"></div>
<div class="a" style="left:378px;top:449px;width:1px;height:566px;background:#a0a0a0"></div>
<div class="t" style="left:12px;top:434px;font-size:13.3px;font-weight:bold;color:#3c3c3c">Selected color</div>
<div class="a" style="left:14px;top:451px;width:113px;height:18px;background:#efefef"></div>
<div class="t" style="left:18px;top:453px;font-size:13px">RGB Levels</div>
<div class="a" style="left:228px;top:449px;width:128px;height:20px;background:#efefef"></div>
<div class="t" style="left:241px;top:451px;font-size:14px">Current Measure</div>
<div class="a" style="left:14px;top:475px;width:200px;height:175px;background:#f0f0f0"></div>
<svg style="left:14px;top:519px" width="200" height="2" viewBox="0 0 200 2" ><path d="M0 1 H200" stroke="#606060" stroke-dasharray="3 2"/></svg>
<div class="t" style="left:26px;top:540px;font-family:&quot;Liberation Serif&quot;,serif;font-size:11.5px;font-weight:bold;color:#000">0.0%</div>
<div class="t" style="left:77px;top:540px;font-family:&quot;Liberation Serif&quot;,serif;font-size:11.5px;font-weight:bold;color:#000">0.0%</div>
<div class="t" style="left:128px;top:540px;font-family:&quot;Liberation Serif&quot;,serif;font-size:11.5px;font-weight:bold;color:#000">0.0%</div>
<div class="t" style="left:176px;top:540px;font-family:&quot;Liberation Serif&quot;,serif;font-size:11.5px;font-weight:bold;color:#000">dE 0.0</div>
<svg style="left:14px;top:551px;overflow:hidden" width="200" height="11"><path d="M0.0 11 V5 L4.0 2.5 L15.0 1 H34.0 L46.0 2.5 L50.0 5 V11Z" fill="#000"/><path d="M3.0 6 L6.0 3.8 L16.0 2.3 H33.0 L44.0 3.8 L47.0 6Z" fill="#8a0000"/><path d="M51.1 11 V5 L55.1 2.5 L66.1 1 H85.1 L97.1 2.5 L101.1 5 V11Z" fill="#000"/><path d="M54.1 6 L57.1 3.8 L67.1 2.3 H84.1 L95.1 3.8 L98.1 6Z" fill="#009000"/><path d="M102.2 11 V5 L106.2 2.5 L117.2 1 H136.2 L148.2 2.5 L152.2 5 V11Z" fill="#000"/><path d="M105.2 6 L108.2 3.8 L118.2 2.3 H135.2 L146.2 3.8 L149.2 6Z" fill="#0000a0"/><path d="M153.3 11 V5 L157.3 2.5 L168.3 1 H187.3 L199.3 2.5 L203.3 5 V11Z" fill="#000"/><path d="M156.3 6 L159.3 3.8 L169.3 2.3 H186.3 L197.3 3.8 L200.3 6Z" fill="#b8860b"/><rect x="0" y="5.5" width="200" height="5.5" fill="#000"/></svg>
<div class="a" style="left:16px;top:576px;width:192px;height:72px;background:#f0f0f0"></div>
<div class="t" style="left:35px;top:578px;font-size:14px;font-weight:bold">Measure</div>
<div class="t" style="left:127px;top:578px;font-size:13.5px;font-weight:bold">Reference</div>
<div class="t" style="left:18px;top:666px;font-size:14px">Target</div>
<div class="a" style="left:50px;top:681px;width:116px;height:89px;background:#000"></div>
<div class="a" style="left:51px;top:682px;width:114px;height:87px;background:conic-gradient(from 0deg at 50% 50%,#40ff00 0deg,#ffd000 45deg,#ff3000 80deg,#ff0000 95deg,#ff0090 135deg,#9000c0 180deg,#2000ff 225deg,#0050d0 260deg,#00a0a0 285deg,#00e0a0 320deg,#40ff00 360deg)"></div>
<svg style="left:50px;top:681px" width="116" height="89" viewBox="0 0 116 89" ><rect x="17.5" y="13.5" width="82" height="63" rx="9" fill="#000" stroke="#fff"/>
<path d="M15 44.5 H101 M58.5 13 V76" stroke="#fff" stroke-dasharray="3 2"/>
<ellipse cx="58.5" cy="44.5" rx="22" ry="15" fill="none" stroke="#fff" stroke-dasharray="3 2"/></svg>
<div class="a" style="left:221px;top:474px;width:151px;height:532px;background:#f0f0f0;border-top:2px solid #696969;border-left:2px solid #696969"></div>
<div class="a" style="left:223px;top:475px;width:55px;height:23px;background:#f0f0f0;border-right:1px solid #696969;border-bottom:1px solid #696969"></div>
<div class="t" style="left:223px;top:480.0px;font-size:12px;font-weight:bold;width:55px;text-align:center">Y cd/m&sup2;</div>
<div class="a" style="left:278px;top:475px;width:77px;height:23px;background:#fff;border-bottom:1px solid #a0a0a0"></div>
<div class="a" style="left:223px;top:498px;width:55px;height:23px;background:#f0f0f0;border-right:1px solid #696969;border-bottom:1px solid #696969"></div>
<div class="t" style="left:223px;top:503.0px;font-size:12px;font-weight:bold;width:55px;text-align:center">Y ftL</div>
<div class="a" style="left:278px;top:498px;width:77px;height:23px;background:#fff;border-bottom:1px solid #a0a0a0"></div>
<div class="a" style="left:223px;top:521px;width:55px;height:23px;background:#f0f0f0;border-right:1px solid #696969;border-bottom:1px solid #696969"></div>
<div class="t" style="left:223px;top:526.0px;font-size:12px;font-weight:bold;width:55px;text-align:center">T&deg;</div>
<div class="a" style="left:278px;top:521px;width:77px;height:23px;background:#fff;border-bottom:1px solid #a0a0a0"></div>
<div class="a" style="left:223px;top:544px;width:55px;height:23px;background:#f0f0f0;border-right:1px solid #696969;border-bottom:1px solid #696969"></div>
<div class="t" style="left:223px;top:549.0px;font-size:12px;font-weight:bold;width:55px;text-align:center">X</div>
<div class="a" style="left:278px;top:544px;width:77px;height:23px;background:#e0e0e0;border-bottom:1px solid #a0a0a0"></div>
<div class="a" style="left:223px;top:567px;width:55px;height:23px;background:#f0f0f0;border-right:1px solid #696969;border-bottom:1px solid #696969"></div>
<div class="t" style="left:223px;top:572.0px;font-size:12px;font-weight:bold;width:55px;text-align:center">Y</div>
<div class="a" style="left:278px;top:567px;width:77px;height:23px;background:#e0e0e0;border-bottom:1px solid #a0a0a0"></div>
<div class="a" style="left:223px;top:590px;width:55px;height:23px;background:#f0f0f0;border-right:1px solid #696969;border-bottom:1px solid #696969"></div>
<div class="t" style="left:223px;top:595.0px;font-size:12px;font-weight:bold;width:55px;text-align:center">Z</div>
<div class="a" style="left:278px;top:590px;width:77px;height:23px;background:#e0e0e0;border-bottom:1px solid #a0a0a0"></div>
<div class="a" style="left:223px;top:613px;width:55px;height:23px;background:#f0f0f0;border-right:1px solid #696969;border-bottom:1px solid #696969"></div>
<div class="t" style="left:223px;top:618.0px;font-size:12px;font-weight:bold;width:55px;text-align:center">R</div>
<div class="a" style="left:278px;top:613px;width:77px;height:23px;background:#fff;border-bottom:1px solid #a0a0a0"></div>
<div class="a" style="left:223px;top:636px;width:55px;height:23px;background:#f0f0f0;border-right:1px solid #696969;border-bottom:1px solid #696969"></div>
<div class="t" style="left:223px;top:641.0px;font-size:12px;font-weight:bold;width:55px;text-align:center">G</div>
<div class="a" style="left:278px;top:636px;width:77px;height:23px;background:#fff;border-bottom:1px solid #a0a0a0"></div>
<div class="a" style="left:223px;top:659px;width:55px;height:23px;background:#f0f0f0;border-right:1px solid #696969;border-bottom:1px solid #696969"></div>
<div class="t" style="left:223px;top:664.0px;font-size:12px;font-weight:bold;width:55px;text-align:center">B</div>
<div class="a" style="left:278px;top:659px;width:77px;height:23px;background:#fff;border-bottom:1px solid #a0a0a0"></div>
<div class="a" style="left:223px;top:682px;width:55px;height:23px;background:#f0f0f0;border-right:1px solid #696969;border-bottom:1px solid #696969"></div>
<div class="t" style="left:223px;top:687.0px;font-size:12px;font-weight:bold;width:55px;text-align:center">x</div>
<div class="a" style="left:278px;top:682px;width:77px;height:23px;background:#e0e0e0;border-bottom:1px solid #a0a0a0"></div>
<div class="a" style="left:223px;top:705px;width:55px;height:23px;background:#f0f0f0;border-right:1px solid #696969;border-bottom:1px solid #696969"></div>
<div class="t" style="left:223px;top:710.0px;font-size:12px;font-weight:bold;width:55px;text-align:center">y</div>
<div class="a" style="left:278px;top:705px;width:77px;height:23px;background:#e0e0e0;border-bottom:1px solid #a0a0a0"></div>
<div class="a" style="left:223px;top:728px;width:55px;height:23px;background:#f0f0f0;border-right:1px solid #696969;border-bottom:1px solid #696969"></div>
<div class="t" style="left:223px;top:733.0px;font-size:12px;font-weight:bold;width:55px;text-align:center">Y</div>
<div class="a" style="left:278px;top:728px;width:77px;height:23px;background:#e0e0e0;border-bottom:1px solid #a0a0a0"></div>
<div class="a" style="left:223px;top:751px;width:55px;height:23px;background:#f0f0f0;border-right:1px solid #696969;border-bottom:1px solid #696969"></div>
<div class="t" style="left:223px;top:756.0px;font-size:12px;font-weight:bold;width:55px;text-align:center">x</div>
<div class="a" style="left:278px;top:751px;width:77px;height:23px;background:#fff;border-bottom:1px solid #a0a0a0"></div>
<div class="a" style="left:223px;top:774px;width:55px;height:23px;background:#f0f0f0;border-right:1px solid #696969;border-bottom:1px solid #696969"></div>
<div class="t" style="left:223px;top:779.0px;font-size:12px;font-weight:bold;width:55px;text-align:center">y</div>
<div class="a" style="left:278px;top:774px;width:77px;height:23px;background:#fff;border-bottom:1px solid #a0a0a0"></div>
<div class="a" style="left:223px;top:797px;width:55px;height:23px;background:#f0f0f0;border-right:1px solid #696969;border-bottom:1px solid #696969"></div>
<div class="t" style="left:223px;top:802.0px;font-size:12px;font-weight:bold;width:55px;text-align:center">z</div>
<div class="a" style="left:278px;top:797px;width:77px;height:23px;background:#fff;border-bottom:1px solid #a0a0a0"></div>
<div class="a" style="left:223px;top:820px;width:55px;height:23px;background:#f0f0f0;border-right:1px solid #696969;border-bottom:1px solid #696969"></div>
<div class="t" style="left:223px;top:825.0px;font-size:12px;font-weight:bold;width:55px;text-align:center">L</div>
<div class="a" style="left:278px;top:820px;width:77px;height:23px;background:#e0e0e0;border-bottom:1px solid #a0a0a0"></div>
<div class="a" style="left:223px;top:843px;width:55px;height:23px;background:#f0f0f0;border-right:1px solid #696969;border-bottom:1px solid #696969"></div>
<div class="t" style="left:223px;top:848.0px;font-size:12px;font-weight:bold;width:55px;text-align:center">a</div>
<div class="a" style="left:278px;top:843px;width:77px;height:23px;background:#e0e0e0;border-bottom:1px solid #a0a0a0"></div>
<div class="a" style="left:223px;top:866px;width:55px;height:23px;background:#f0f0f0;border-right:1px solid #696969;border-bottom:1px solid #696969"></div>
<div class="t" style="left:223px;top:871.0px;font-size:12px;font-weight:bold;width:55px;text-align:center">b</div>
<div class="a" style="left:278px;top:866px;width:77px;height:23px;background:#e0e0e0;border-bottom:1px solid #a0a0a0"></div>
<div class="a" style="left:223px;top:889px;width:55px;height:23px;background:#f0f0f0;border-right:1px solid #696969;border-bottom:1px solid #696969"></div>
<div class="t" style="left:223px;top:894.0px;font-size:12px;font-weight:bold;width:55px;text-align:center">L</div>
<div class="a" style="left:278px;top:889px;width:77px;height:23px;background:#fff;border-bottom:1px solid #a0a0a0"></div>
<div class="a" style="left:223px;top:912px;width:55px;height:23px;background:#f0f0f0;border-right:1px solid #696969;border-bottom:1px solid #696969"></div>
<div class="t" style="left:223px;top:917.0px;font-size:12px;font-weight:bold;width:55px;text-align:center">C</div>
<div class="a" style="left:278px;top:912px;width:77px;height:23px;background:#fff;border-bottom:1px solid #a0a0a0"></div>
<div class="a" style="left:223px;top:935px;width:55px;height:23px;background:#f0f0f0;border-right:1px solid #696969;border-bottom:1px solid #696969"></div>
<div class="t" style="left:223px;top:940.0px;font-size:12px;font-weight:bold;width:55px;text-align:center">H</div>
<div class="a" style="left:278px;top:935px;width:77px;height:23px;background:#fff;border-bottom:1px solid #a0a0a0"></div>
<div class="a" style="left:223px;top:958px;width:55px;height:23px;background:#f0f0f0;border-right:1px solid #696969;border-bottom:1px solid #696969"></div>
<div class="t" style="left:223px;top:963.0px;font-size:12px;font-weight:bold;width:55px;text-align:center">L</div>
<div class="a" style="left:278px;top:958px;width:77px;height:23px;background:#e0e0e0;border-bottom:1px solid #a0a0a0"></div>
<div class="a" style="left:223px;top:981px;width:55px;height:23px;background:#f0f0f0;border-right:1px solid #696969;border-bottom:1px solid #696969"></div>
<div class="t" style="left:223px;top:986.0px;font-size:12px;font-weight:bold;width:55px;text-align:center">M</div>
<div class="a" style="left:278px;top:981px;width:77px;height:23px;background:#e0e0e0;border-bottom:1px solid #a0a0a0"></div>
<div class="a" style="left:223px;top:1004px;width:55px;height:2px;background:#f0f0f0;border-right:1px solid #696969"></div>
<div class="a" style="left:278px;top:1004px;width:77px;height:2px;background:#e0e0e0"></div>
<div class="a" style="left:355px;top:476px;width:17px;height:530px;background:#f0f0f0"></div>
<div class="a" style="left:356px;top:488px;width:15px;height:484px;background:#cdcdcd"></div>
<svg style="left:359px;top:481px" width="9" height="6" viewBox="0 0 9 6" ><path d="M0.5 5.5 L4.5 1 L8.5 5.5" fill="none" stroke="#606060" stroke-width="1.3"/></svg>
<svg style="left:359px;top:994px" width="9" height="6" viewBox="0 0 9 6" ><path d="M0.5 0.5 L4.5 5 L8.5 0.5" fill="none" stroke="#606060" stroke-width="1.3"/></svg>
<div class="a" style="left:389px;top:428px;width:1510px;height:593px;background:#fff"></div>
<div class="a" style="left:391px;top:430px;width:1506px;height:589px;border:2px solid #7a7a7a;background:#eaeaea"></div>
<div class="a" style="left:393px;top:431px;width:1502px;height:17px;background:linear-gradient(90deg,#e3eaf5,#ebf0f8 60%,#e6ecf6);border-radius:7px 7px 0 0;border-bottom:1px solid #a0a0a0"></div>
<div class="a" style="left:393px;top:1014px;width:1502px;height:1px;background:#a0a0a0"></div>
<div class="a" style="left:1892px;top:449px;width:1px;height:566px;background:#a0a0a0"></div>
<div class="t" style="left:398px;top:434px;font-size:14px;font-weight:bold;color:#3c3c3c">Information</div>
<div class="a" style="left:397px;top:453px;width:301px;height:23px;background:#fff;border-top:2px solid #696969;border-left:2px solid #696969;border-right:1px solid #e0e0e0;border-bottom:1px solid #e0e0e0"></div>
<div class="a" style="left:399px;top:456px;width:281px;height:18px;background:#0078d7"></div>
<div class="t" style="left:401px;top:458px;font-size:13.9px;color:#fff">NearBlack - NearWhite</div>
<div class="a" style="left:680px;top:456px;width:16px;height:18px;background:#f0f0f0;border-right:1px solid #696969;border-bottom:1px solid #696969;border-top:1px solid #fff;border-left:1px solid #fff"></div>
<svg style="left:684px;top:463px" width="8" height="5" viewBox="0 0 8 5" ><path d="M0 0 H8 L4 5Z" fill="#000"/></svg>
<div class="a" style="left:398px;top:482px;width:747px;height:526px;border-top:2px solid #6a6a6a;border-left:2px solid #6a6a6a;border-right:2px solid #fff;border-bottom:2px solid #fff"></div>
<div class="a" style="left:400px;top:484px;width:743px;height:522px;border-top:1px solid #a0a0a0;border-left:1px solid #a0a0a0"></div>
<div class="a" style="left:401px;top:485px;width:741px;height:520px;border-top:1px solid #7a7a7a;border-left:1px solid #0d4a4a"></div>
<div class="a" style="left:402px;top:486px;width:740px;height:519px;background:linear-gradient(90deg,#242424 0%,#1b1b1b 25%,#141414 60%,#0e0e0e 100%)"></div>
<svg style="left:402px;top:486px" width="740" height="519"><path d="M148.5 0 V519" stroke="#0d4a4a" stroke-width="1"/><path d="M296.5 0 V519" stroke="#0d4a4a" stroke-width="1"/><path d="M444.5 0 V519" stroke="#0d4a4a" stroke-width="1"/><path d="M592.5 0 V519" stroke="#0d4a4a" stroke-width="1"/><path d="M0 467.5 H740" stroke="#0d4a4a" stroke-width="1"/><path d="M0 415.5 H740" stroke="#0d4a4a" stroke-width="1"/><path d="M0 363.5 H740" stroke="#0d4a4a" stroke-width="1"/><path d="M0 311.5 H740" stroke="#0d4a4a" stroke-width="1"/><path d="M0 259.5 H740" stroke="#0d4a4a" stroke-width="1"/><path d="M0 207.5 H740" stroke="#0d4a4a" stroke-width="1"/><path d="M0 155.5 H740" stroke="#0d4a4a" stroke-width="1"/><path d="M0 103.5 H740" stroke="#0d4a4a" stroke-width="1"/><path d="M0 51.5 H740" stroke="#0d4a4a" stroke-width="1"/><polyline points="2,504 135,503.5 270,501 473,491 608,480" fill="none" stroke="#e8e8e8" stroke-width="1" stroke-dasharray="3 2"/><polyline points="2,504 135,503.5 270,497 473,480 608,462" fill="none" stroke="#ffff00" stroke-width="2.2"/><rect x="-2" y="500" width="8" height="8" fill="#e0e0e0"/><rect x="131" y="499.5" width="8" height="8" fill="#e0e0e0"/><rect x="266" y="497" width="8" height="8" fill="#e0e0e0"/><rect x="469" y="487" width="8" height="8" fill="#e0e0e0"/><rect x="604" y="476" width="8" height="8" fill="#e0e0e0"/><rect x="266" y="493" width="8" height="8" fill="#ffff00"/><rect x="469" y="476" width="8" height="8" fill="#ffff00"/><rect x="604" y="458" width="8" height="8" fill="#ffff00"/></svg>
<div class="t" style="left:400px;top:488px;font-size:14.8px;font-weight:bold;color:#d8d820;width:772px;text-align:center">Near Black Luminance Response</div>
<div class="t" style="left:404px;top:937.6px;font-size:13px;color:#c8c8c8">0.1%</div>
<div class="t" style="left:404px;top:885.6px;font-size:13px;color:#c8c8c8">0.2%</div>
<div class="t" style="left:404px;top:833.6px;font-size:13px;color:#c8c8c8">0.3%</div>
<div class="t" style="left:404px;top:781.6px;font-size:13px;color:#c8c8c8">0.4%</div>
<div class="t" style="left:404px;top:729.6px;font-size:13px;color:#c8c8c8">0.5%</div>
<div class="t" style="left:404px;top:677.6px;font-size:13px;color:#c8c8c8">0.6%</div>
<div class="t" style="left:404px;top:625.6px;font-size:13px;color:#c8c8c8">0.7%</div>
<div class="t" style="left:404px;top:573.6px;font-size:13px;color:#c8c8c8">0.8%</div>
<div class="t" style="left:404px;top:521.6px;font-size:13px;color:#c8c8c8">0.9%</div>
<div class="t" style="left:977px;top:950px;font-size:16px;font-weight:bold;color:#4a4a4a">hcfr.sourceforge.net</div>
<div class="t" style="left:552px;top:990px;font-family:&quot;Liberation Serif&quot;,serif;font-size:13.6px;color:#e0e0e0">1% White</div>
<div class="t" style="left:700px;top:990px;font-family:&quot;Liberation Serif&quot;,serif;font-size:13.6px;color:#e0e0e0">2% White</div>
<div class="t" style="left:848px;top:990px;font-family:&quot;Liberation Serif&quot;,serif;font-size:13.6px;color:#e0e0e0">3% White</div>
<div class="t" style="left:996px;top:990px;font-family:&quot;Liberation Serif&quot;,serif;font-size:13.6px;color:#e0e0e0">4% White</div>
<div class="a" style="left:1146px;top:482px;width:750px;height:526px;border-top:2px solid #6a6a6a;border-left:2px solid #6a6a6a;border-right:2px solid #fff;border-bottom:2px solid #fff"></div>
<div class="a" style="left:1148px;top:484px;width:746px;height:522px;border-top:1px solid #a0a0a0;border-left:1px solid #a0a0a0"></div>
<div class="a" style="left:1149px;top:485px;width:744px;height:520px;border-top:1px solid #7a7a7a;border-left:1px solid #124642"></div>
<div class="a" style="left:1151px;top:486px;width:741px;height:519px;background:linear-gradient(90deg,#767676 0%,#a8a8a8 35%,#c8c8c8 60%,#f4f4f4 100%)"></div>
<svg style="left:1151px;top:486px" width="741" height="519"><path d="M122.5 0 V519" stroke="#124642" stroke-width="1.3"/><path d="M245.5 0 V519" stroke="#124642" stroke-width="1.3"/><path d="M369.5 0 V519" stroke="#124642" stroke-width="1.3"/><path d="M493.5 0 V519" stroke="#124642" stroke-width="1.3"/><path d="M616.5 0 V519" stroke="#124642" stroke-width="1.3"/><path d="M0 86.5 H741" stroke="#124642" stroke-width="1.3"/><path d="M0 173.5 H741" stroke="#124642" stroke-width="1.3"/><path d="M0 259.5 H741" stroke="#124642" stroke-width="1.3"/><path d="M0 346.5 H741" stroke="#124642" stroke-width="1.3"/><path d="M0 432.5 H741" stroke="#124642" stroke-width="1.3"/><polyline points="232,457 344,367 513,231 625,141 737,44" fill="none" stroke="#f0f0f0" stroke-width="1" stroke-dasharray="3 2"/><polyline points="232,457 344,376 513,232 625,142 739,48" fill="none" stroke="#ffff00" stroke-width="2.2"/><rect x="228" y="453" width="8" height="8" fill="#e4e4e4"/><rect x="340" y="363" width="8" height="8" fill="#e4e4e4"/><rect x="509" y="227" width="8" height="8" fill="#e4e4e4"/><rect x="621" y="137" width="8" height="8" fill="#e4e4e4"/><rect x="733" y="40" width="8" height="8" fill="#e4e4e4"/><rect x="340.5" y="373" width="7" height="6" fill="#ffff00"/><rect x="509.5" y="229" width="7" height="6" fill="#ffff00"/><rect x="621.5" y="139" width="7" height="6" fill="#ffff00"/><rect x="735.5" y="45" width="7" height="6" fill="#ffff00"/></svg>
<div class="t" style="left:1148px;top:488px;font-size:14.8px;font-weight:bold;color:#6a2f6e;width:774px;text-align:center">Near White Luminance Response</div>
<div class="t" style="left:1151px;top:556.6px;font-family:&quot;Liberation Serif&quot;,serif;font-size:13.6px;color:#c8c8c8">99%</div>
<div class="t" style="left:1151px;top:643px;font-family:&quot;Liberation Serif&quot;,serif;font-size:13.6px;color:#c8c8c8">97%</div>
<div class="t" style="left:1151px;top:729.5px;font-family:&quot;Liberation Serif&quot;,serif;font-size:13.6px;color:#c8c8c8">95%</div>
<div class="t" style="left:1151px;top:816px;font-family:&quot;Liberation Serif&quot;,serif;font-size:13.6px;color:#c8c8c8">93%</div>
<div class="t" style="left:1151px;top:902.5px;font-family:&quot;Liberation Serif&quot;,serif;font-size:13.6px;color:#c8c8c8">91%</div>
<div class="t" style="left:1725px;top:950px;font-size:16px;font-weight:bold;color:#858585">hcfr.sourceforge.net</div>
<div class="t" style="left:1275px;top:990px;font-family:&quot;Liberation Serif&quot;,serif;font-size:13.6px;color:#1a1a1a">95% White</div>
<div class="t" style="left:1398px;top:990px;font-family:&quot;Liberation Serif&quot;,serif;font-size:13.6px;color:#1a1a1a">96% White</div>
<div class="t" style="left:1522px;top:990px;font-family:&quot;Liberation Serif&quot;,serif;font-size:13.6px;color:#1a1a1a">97% White</div>
<div class="t" style="left:1645px;top:990px;font-family:&quot;Liberation Serif&quot;,serif;font-size:13.6px;color:#1a1a1a">98% White</div>
<div class="t" style="left:1768px;top:990px;font-family:&quot;Liberation Serif&quot;,serif;font-size:13.6px;color:#1a1a1a">99% White</div>
<div class="a" style="left:1901px;top:137px;width:19px;height:885px;background:#f0f0f0"></div>
<div class="a" style="left:1902px;top:152px;width:15px;height:827px;background:#cdcdcd"></div>
<svg style="left:1905px;top:141px" width="10" height="7" viewBox="0 0 10 7" ><path d="M0.5 6 L5 1.2 L9.5 6" fill="none" stroke="#606060" stroke-width="1.5"/></svg>
<svg style="left:1905px;top:1010px" width="10" height="7" viewBox="0 0 10 7" ><path d="M0.5 1 L5 5.8 L9.5 1" fill="none" stroke="#606060" stroke-width="1.5"/></svg>
<div class="a" style="left:0px;top:1019px;width:1920px;height:23px;background:#f0f0f0"></div>
<div class="a" style="left:0px;top:1019px;width:1900px;height:3px;background:#bcbcbc"></div>
<div class="a" style="left:0px;top:1022px;width:1900px;height:1px;background:#fff"></div>
<div class="a" style="left:20px;top:1023px;width:1823px;height:15px;background:#cdcdcd"></div>
<svg style="left:6px;top:1026px" width="7" height="10" viewBox="0 0 7 10" ><path d="M6 0.5 L1.2 5 L6 9.5" fill="none" stroke="#606060" stroke-width="1.5"/></svg>
<svg style="left:1889px;top:1026px" width="7" height="10" viewBox="0 0 7 10" ><path d="M1 0.5 L5.8 5 L1 9.5" fill="none" stroke="#606060" stroke-width="1.5"/></svg>
<div class="a" style="left:0px;top:1042px;width:1920px;height:19px;background:#f0f0f0;border-top:1px solid #000"></div>
<div class="a" style="left:1px;top:1043px;width:17px;height:18px;background:#f0f0f0;border:1px solid #000;border-top:none"></div>
<div class="a" style="left:18px;top:1043px;width:17px;height:18px;background:#f0f0f0;border:1px solid #000;border-top:none"></div>
<div class="a" style="left:35px;top:1043px;width:18px;height:18px;background:#f0f0f0;border:1px solid #000;border-top:none"></div>
<svg style="left:5px;top:1046px" width="10" height="10" viewBox="0 0 10 10" ><path d="M1 1 L9 9 M9 1 L1 9" stroke="#000" stroke-width="1.3"/></svg>
<svg style="left:23px;top:1048px" width="5" height="8" viewBox="0 0 5 8" ><path d="M4.5 0 L0 4 L4.5 8Z" fill="#000"/></svg>
<svg style="left:41px;top:1048px" width="5" height="8" viewBox="0 0 5 8" ><path d="M0 0 L4.5 4 L0 8Z" fill="#000"/></svg>
<svg style="left:50px;top:1042px" width="310" height="19" viewBox="0 0 310 19" ><path d="M4.8 1 L12.9 18 H69.5 L77 1Z" fill="#fff"/>
<path d="M4.8 1 L12.9 18 M77 1 L69.5 18 M72 8 L76 18 M136.5 1 L140.5 11 L136.5 18 M189 1 L193 11 L189 18 M302 1 L294 18 M69.5 17.5 H294" fill="none" stroke="#000" stroke-width="1.1"/></svg>
<div class="t" style="left:67px;top:1047px;font-size:11px;font-weight:bold">Measures</div>
<div class="t" style="left:134px;top:1047px;font-size:9.7px">Luminance</div>
<div class="t" style="left:200px;top:1047px;font-size:9.8px">Gamma</div>
<div class="t" style="left:258px;top:1048px;font-size:9.3px">Color temperature</div>
<svg style="left:1751px;top:1044px" width="14" height="14" viewBox="0 0 14 14" ><path d="M0.5 1 H13 V9 L11 13.5 H8.5 L7 11 L5 13.5 H2.5 L0.5 9Z" fill="#7a7a00" stroke="#202000" stroke-width="0.8"/><rect x="2" y="2" width="8" height="5.5" fill="#fff"/><path d="M3 4 H8 V7 M6 5.5 L8 7.3 L9.5 5.5" stroke="#e01010" stroke-width="1.6" fill="none"/><rect x="8" y="9" width="4.5" height="4" fill="#f0f000"/></svg>
<div class="a" style="left:1846px;top:1044px;width:13px;height:13px;background:#fff;border-top:1px solid #696969;border-left:1px solid #696969;border-right:1px solid #e8e8e8;border-bottom:1px solid #e8e8e8"></div>
<div class="t" style="left:1864px;top:1045px;font-size:10.8px">Reference</div>
<div class="a" style="left:0px;top:1061px;width:1920px;height:19px;background:#e6ecf6"></div>
<div class="t" style="left:2px;top:1065px;font-size:11.6px">Ready</div>
<div class="a" style="left:1743px;top:1062px;width:74px;height:16px;background:#eef3fa;border:1px solid #a8bcd8;border-bottom:none"></div>
<div class="a" style="left:1820px;top:1062px;width:28px;height:16px;background:#eef3fa;border:1px solid #a8bcd8;border-bottom:none"></div>
<div class="t" style="left:1822px;top:1066px;font-size:12px">CAP</div>
<div class="a" style="left:1851px;top:1062px;width:33px;height:16px;background:#eef3fa;border:1px solid #a8bcd8;border-bottom:none"></div>
<div class="t" style="left:1853px;top:1066px;font-size:12px">NUM</div>
<div class="a" style="left:1887px;top:1062px;width:33px;height:16px;background:#eef3fa;border:1px solid #a8bcd8;border-bottom:none"></div>
<div class="a" style="left:0px;top:1078px;width:1920px;height:2px;background:#333"></div>
</body></html>
